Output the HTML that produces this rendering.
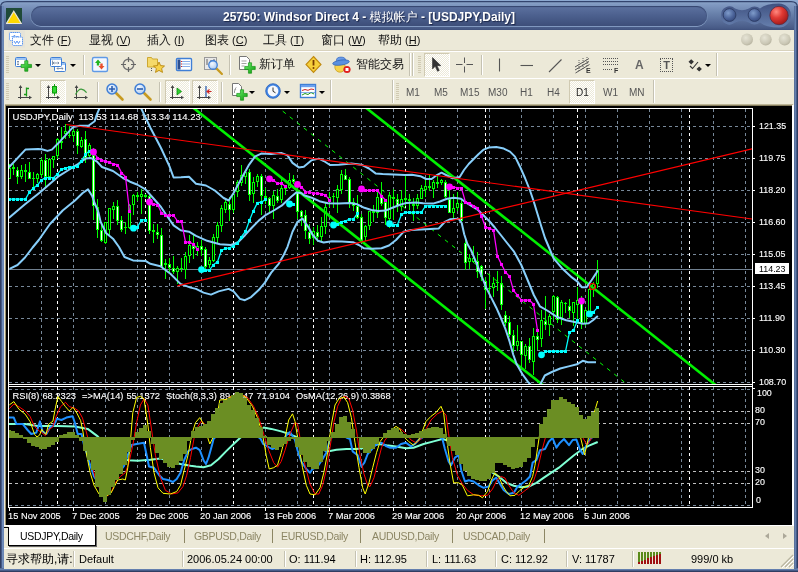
<!DOCTYPE html>
<html><head><meta charset="utf-8"><title>25750: Windsor Direct 4</title>
<style>
html,body{margin:0;padding:0}
body>*{will-change:transform}
body{width:798px;height:572px;position:relative;overflow:hidden;background:#ece9d8;font-family:"Liberation Sans","WenQuanYi Zen Hei","Noto Sans CJK SC",sans-serif;font-size:12px;color:#000}
.abs{position:absolute}
#frameL{left:0;top:0;width:4px;height:572px;background:linear-gradient(90deg,#2b3554 0,#384a76 30%,#6f8cba 62%,#6a86b4 88%,#4a5f8e 100%)}
#frameR{left:794px;top:0;width:4px;height:572px;background:linear-gradient(90deg,#3a4a72 0,#6f8cba 22%,#5a74a4 50%,#34446e 75%,#2b3554)}
#frameB{left:0;top:568px;width:798px;height:4px;background:linear-gradient(#3a4a72 0,#6f8cba 22%,#5a74a4 50%,#34446e 75%,#2b3554)}
#title{left:0;top:0;width:798px;height:30px;background:linear-gradient(#8aa3c8 0,#8aa3c8 2px,#7f98c0 5px,#6880aa 14px,#566b97 22px,#485b87 28px,#3f507c 30px);border-radius:7px 7px 0 0}
#corner{left:0;top:0;width:798px;height:2px;background:#8ca8d0}
#pill{left:31px;top:6px;width:676px;height:20px;border-radius:10px;background:linear-gradient(#5d72a0,#4d618f 45%,#41537f 85%,#3d4e79);box-shadow:inset 0 1px 1px #34446d,0 1px 0 #8098bf,-1px 0 0 #7088b0,1px 0 0 #7088b0}
#ttext{left:0;top:8.5px;width:738px;text-align:center;color:#fff;font-weight:bold;font-size:12px;line-height:17px;text-shadow:1px 1px 1px #1c2748;white-space:nowrap}
.tb{border-radius:50%}
#menubar{left:4px;top:30px;width:790px;height:20px;background:#ece9d8;border-bottom:1px solid #d8d2bd}
.mi{top:33px;height:16px;line-height:15px;font-size:12px;white-space:nowrap;color:#111}
.mi i{font-style:normal;font-size:11px;margin-left:3px}
.mi u{text-decoration:underline}
#tb1{left:4px;top:51px;width:790px;height:26px;background:#ece9d8;border-top:1px solid #fff}
#tb2{left:4px;top:78px;width:790px;height:26px;background:#ece9d8;border-top:1px solid #fff}
.grip{width:3px;height:18px;background:repeating-linear-gradient(#d0cab2 0,#d0cab2 1px,#ece9d8 1px,#ece9d8 2px)}
.sep{width:1px;height:20px;background:#c5c2b2;box-shadow:1px 0 0 #fff}
.chk{background:#f6f5ee;border:1px solid #fff;border-top-color:#d0cab2;border-left-color:#d0cab2;background-image:repeating-conic-gradient(#fff 0 25%,#ece9d8 0 50%);background-size:2px 2px}
.tf{top:87px;font-size:10px;color:#555;line-height:12px;white-space:nowrap}
.dd{width:0;height:0;border-left:3px solid transparent;border-right:3px solid transparent;border-top:3px solid #000}
.tl{font-size:12px;line-height:14px;white-space:nowrap;color:#111}
#tabs{left:4px;top:526px;width:790px;height:22px;background:#ece9d8}
.tab{top:530px;font-size:10.5px;letter-spacing:-0.3px;line-height:13px;color:#8c8664;white-space:nowrap}
.tsep{top:529px;width:1px;height:14px;background:#8c8664}
#status{left:4px;top:548px;width:790px;height:20px;background:#ece9d8;border-top:1px solid #fff}
.st{top:552px;font-size:11px;line-height:14px;white-space:nowrap;color:#000}
.sd{top:551px;width:1px;height:16px;background:#c5c2b2;box-shadow:1px 0 0 #fff}
</style></head><body>
<div class="abs" id="corner"></div>
<div class="abs" id="title"></div>
<div class="abs" id="frameL" style="top:6px"></div><div class="abs" id="frameR" style="top:6px"></div><div class="abs" id="frameB"></div>
<svg class="abs" style="left:0;top:0" width="798" height="32" viewBox="0 0 798 32"><path d="M0 0H798V9H797.500V7Q797.500 1.500 791 1.500H7Q0.500 1.500 0.500 7V9H0z" fill="#8ca8d0"/><path d="M0.600 31V7Q0.600 1.600 7 1.600H791Q797.400 1.600 797.400 7V31" fill="none" stroke="#33446e" stroke-width="1.2"/></svg>
<svg class="abs" style="left:6px;top:8px" width="16" height="16" viewBox="0 0 16 16"><rect width="16" height="16" fill="#1f4a38"/><path d="M7.8 3.2 L15.4 15.6 L0.4 15.6 Z" fill="#ffd800" stroke="#e8e4d8" stroke-width="1.2"/></svg>
<div class="abs" id="pill"></div>
<div class="abs" id="ttext">25750: Windsor Direct 4 - 模拟帐户 - [USDJPY,Daily]</div>
<svg class="abs" style="left:710px;top:0" width="84" height="30" viewBox="710 0 84 30">
<defs>
<radialGradient id="gb" cx="0.4" cy="0.35" r="0.7"><stop offset="0" stop-color="#7f9ccb"/><stop offset="0.6" stop-color="#4b6399"/><stop offset="1" stop-color="#34477a"/></radialGradient>
<radialGradient id="gr" cx="0.35" cy="0.3" r="0.75"><stop offset="0" stop-color="#ff8a80"/><stop offset="0.45" stop-color="#e03a34"/><stop offset="1" stop-color="#a01818"/></radialGradient>
<linearGradient id="gs" x1="0" y1="0" x2="0" y2="1"><stop offset="0" stop-color="#38497a"/><stop offset="1" stop-color="#6a84b2"/></linearGradient>
</defs>
<path d="M721 15 a8.5 8.5 0 0 1 14 -6.5 q7 3.5 14 0 a8.5 8.5 0 0 1 11 0 q6 -5 19 -5 a12 12 0 0 1 0 24 q-13 0 -19 -5 a8.5 8.5 0 0 1 -11 0 q-7 -3.5 -14 0 a8.5 8.5 0 0 1 -14 -6.5z" fill="url(#gs)" opacity="0.9"/>
<circle cx="729.5" cy="15" r="6.4" fill="url(#gb)" stroke="#2f3f68" stroke-width="1"/><circle cx="754.5" cy="15" r="6.4" fill="url(#gb)" stroke="#2f3f68" stroke-width="1"/>
<circle cx="779" cy="15.5" r="9.2" fill="url(#gr)" stroke="#5a2a40" stroke-width="0.8"/>
</svg>
<div class="abs" id="menubar"></div>
<svg class="abs" style="left:8px;top:30px" width="18" height="18" viewBox="8 30 18 18"><rect x="8" y="30.500" width="17" height="17" fill="#e6e4d8"/><rect x="9.500" y="32.500" width="11" height="8" rx="1" fill="#fff" stroke="#5a96f0" stroke-dasharray="1.5,0.5"/><path d="M11.500 36.500h2l1-1.500 1 3 1-1.500h2" stroke="#4a8af0" fill="none" stroke-width="0.8"/><rect x="12.500" y="37" width="10" height="8.500" rx="1" fill="#fff" stroke="#5a96f0" stroke-dasharray="1.5,0.5"/><path d="M14 41l1.500 2.500 1.500-2.500 1.500 2.500 1.500-2.500" stroke="#4a8af0" fill="none" stroke-width="0.9"/></svg>
<div class="abs mi" style="left:30px">文件<i>(<u>F</u>)</i></div>
<div class="abs mi" style="left:89px">显视<i>(<u>V</u>)</i></div>
<div class="abs mi" style="left:147px">插入<i>(<u>I</u>)</i></div>
<div class="abs mi" style="left:205px">图表<i>(<u>C</u>)</i></div>
<div class="abs mi" style="left:263px">工具<i>(<u>T</u>)</i></div>
<div class="abs mi" style="left:321px">窗口<i>(<u>W</u>)</i></div>
<div class="abs mi" style="left:378px">帮助<i>(<u>H</u>)</i></div>
<svg class="abs" style="left:738px;top:31px" width="56" height="18" viewBox="738 31 56 18"><defs><radialGradient id="gm" cx="0.4" cy="0.35" r="0.7"><stop offset="0" stop-color="#e6e4d6"/><stop offset="0.7" stop-color="#cbc8b6"/><stop offset="1" stop-color="#b4b09c"/></radialGradient></defs>
<circle cx="747" cy="39.5" r="6" fill="url(#gm)"/><circle cx="765.7" cy="39.5" r="6" fill="url(#gm)"/><circle cx="784.7" cy="39.5" r="6" fill="url(#gm)"/></svg>
<div class="abs" id="tb1"></div><div class="abs" id="tb2"></div>

<!-- toolbar row 1 -->
<div class="abs grip" style="left:6px;top:56px"></div>
<div class="abs sep" style="left:83px;top:55px"></div>
<div class="abs sep" style="left:229px;top:55px"></div>
<div class="abs sep" style="left:409px;top:53px;height:23px"></div><div class="abs sep" style="left:412px;top:53px;height:23px"></div>
<div class="abs grip" style="left:418px;top:56px"></div><div class="abs sep" style="left:716px;top:53px;height:23px"></div>
<div class="abs chk" style="left:424px;top:53px;width:24px;height:22px"></div>
<div class="abs sep" style="left:481px;top:55px"></div>
<div class="abs dd" style="left:35px;top:64px"></div><div class="abs dd" style="left:70px;top:64px"></div><div class="abs dd" style="left:705px;top:64px"></div>
<div class="abs tl" style="left:259px;top:57px">新订单</div>
<div class="abs tl" style="left:356px;top:57px">智能交易</div>
<div class="abs" style="left:634.5px;top:58px;font-size:12px;font-weight:bold;color:#666;line-height:14px">A</div>
<div class="abs" style="left:660px;top:58px;font-size:11px;font-weight:bold;color:#555;line-height:13px;width:11px;height:12px;border:1px dotted #555;text-align:center">T</div>
<div class="abs" style="left:586px;top:67px;font-size:7px;font-weight:bold;color:#333;line-height:8px">E</div>
<div class="abs" style="left:614px;top:67px;font-size:7px;font-weight:bold;color:#333;line-height:8px">F</div>
<!-- toolbar row 2 -->
<div class="abs grip" style="left:6px;top:83px"></div>
<div class="abs chk" style="left:40px;top:80px;width:24px;height:22px"></div>
<div class="abs sep" style="left:97px;top:82px"></div>
<div class="abs sep" style="left:159px;top:82px"></div>
<div class="abs chk" style="left:165px;top:80px;width:23px;height:22px"></div>
<div class="abs chk" style="left:192px;top:80px;width:24px;height:22px"></div>
<div class="abs sep" style="left:221px;top:82px"></div>
<div class="abs dd" style="left:249px;top:91px"></div><div class="abs dd" style="left:284px;top:91px"></div><div class="abs dd" style="left:319px;top:91px"></div>
<div class="abs sep" style="left:330px;top:80px;height:23px"></div>
<div class="abs sep" style="left:392px;top:80px;height:23px"></div>
<div class="abs grip" style="left:396px;top:83px"></div>
<div class="abs chk" style="left:569px;top:80px;width:24px;height:22px"></div>
<div class="abs sep" style="left:653px;top:80px;height:23px"></div>
<div class="abs tf" style="left:406px">M1</div><div class="abs tf" style="left:434px">M5</div><div class="abs tf" style="left:460px">M15</div><div class="abs tf" style="left:488px">M30</div><div class="abs tf" style="left:520px">H1</div><div class="abs tf" style="left:547px">H4</div><div class="abs tf" style="left:576px;color:#222">D1</div><div class="abs tf" style="left:603px">W1</div><div class="abs tf" style="left:629px">MN</div>
<svg class="abs" style="left:4px;top:51px" width="790" height="54" viewBox="4 51 790 54">
<defs>
<linearGradient id="gpl" x1="0" y1="0" x2="1" y2="1"><stop offset="0" stop-color="#6cf06c"/><stop offset="1" stop-color="#0a9a0a"/></linearGradient>
<radialGradient id="glens" cx="0.4" cy="0.35" r="0.7"><stop offset="0" stop-color="#f4f9ff"/><stop offset="1" stop-color="#a9c8f0"/></radialGradient>
<g id="plus"><path d="M-1.5 -5h3v3.5h3.5v3h-3.5v3.5h-3v-3.5h-3.5v-3h3.5z" fill="url(#gpl)" stroke="#0a8a0a" stroke-width="0.6"/></g>
<g id="win"><rect x="0.5" y="0.5" width="11" height="9" rx="1" fill="#fff" stroke="#3f7fd6"/><rect x="1" y="1" width="10" height="2" fill="#9cc4f4"/></g>
<g id="axes"><path d="M3.500 3v13M1 14.500h13" stroke="#444" stroke-width="1" fill="none"/><path d="M3.500 2l-1.800 3h3.600zM15 14.500l-3 -1.800v3.600z" fill="#444"/></g>
<g id="mag"><line x1="4" y1="4" x2="10.5" y2="10.5" stroke="#c79a20" stroke-width="2.6" stroke-linecap="round"/><circle cx="0" cy="0" r="5" fill="url(#glens)" stroke="#3f7fd6" stroke-width="1.5"/></g>
</defs>
<!-- 1 new chart -->
<g transform="translate(15,57)"><use href="#win"/><path d="M3 4v4M2 5l1-1 1 1M2 7l1 1 1-1" stroke="#6a7f9a" stroke-width="0.8" fill="none"/></g><use href="#plus" transform="translate(26.3,66) scale(1.05)"/>
<!-- 2 profiles -->
<g transform="translate(54,62)"><use href="#win"/><path d="M3 6.500h6M3 6.500l1.200-1.200M3 6.500l1.200 1.200M9 6.500l-1.200-1.200M9 6.500l-1.200 1.200" stroke="#6a7f9a" stroke-width="0.8" fill="none"/></g><g transform="translate(50,57)"><use href="#win"/><path d="M3 6h6M3 6l1.200-1.200M3 6l1.200 1.200M9 6l-1.200-1.200M9 6l-1.200 1.200M2.500 3.500v4.500" stroke="#6a7f9a" stroke-width="0.8" fill="none"/></g>
<!-- 3 market watch -->
<rect x="92.5" y="57.5" width="15" height="14" rx="1.5" fill="#f4f8ff" stroke="#5f9ae6" stroke-width="1.4"/><path d="M96.800 65.500v-2.500h-1.800l3-3.500 3 3.500h-1.800v2.500z" fill="#22b422"/><path d="M100.300 63.500v2.500h-1.800l3 3.500 3-3.500h-1.800v-2.500z" fill="#e8502a"/>
<!-- 4 crosshair -->
<circle cx="128.5" cy="64.5" r="5.3" fill="none" stroke="#777" stroke-width="1.4"/><path d="M128.5 57v5M128.5 67v5M121 64.5h5M131 64.5h5" stroke="#666" stroke-width="1.2"/>
<!-- 5 folder star -->
<path d="M147.5 60v-2.5h4l1 1.5h5v8h-10z" fill="#f5d96a" stroke="#c9a227" stroke-width="0.9"/><path d="M159 62l1.6 3.6 3.9.4-2.9 2.6.9 3.8-3.5-2-3.5 2 .9-3.8-2.9-2.6 3.9-.4z" fill="#f7d24a" stroke="#b8860b" stroke-width="0.9"/><path d="M151.5 68v4" stroke="#555" stroke-dasharray="1,1"/>
<!-- 6 navigator -->
<rect x="176.5" y="58.5" width="15" height="12" rx="1" fill="#fff" stroke="#3f7fd6" stroke-width="1.4"/><rect x="177.5" y="59.5" width="3" height="10" fill="#2d4f8f"/><path d="M182 61.500h8M182 64h8M182 66.500h8" stroke="#7aa6e6" stroke-width="0.9"/><path d="M181 61.500h1M181 64h1M181 66.500h1" stroke="#d22" stroke-width="1"/>
<!-- 7 magnifier chart -->
<rect x="204.500" y="57.500" width="12" height="12" fill="#e8e8e8" stroke="#999"/><path d="M207 59v6M211 60v7M214 59v5" stroke="#555" stroke-width="0.9"/><use href="#mag" transform="translate(213,65) scale(0.85)"/>
<!-- 8 new order -->
<path d="M239.500 56.500h7l3 3v10h-10z" fill="#fff" stroke="#777"/><path d="M241.500 61h5M241.500 63.500h5M241.500 66h3" stroke="#999" stroke-width="0.9"/><use href="#plus" transform="translate(250,68) scale(1.05)"/>
<!-- 9 diamond -->
<path d="M313.500 56.500l7.500 8-7.500 8-7.500-8z" fill="#f6cf3a" stroke="#c08a10" stroke-width="1.1"/><path d="M313.500 60v5.500" stroke="#7a3b00" stroke-width="1.8"/><circle cx="313.500" cy="68" r="1" fill="#7a3b00"/>
<!-- 10 expert -->
<circle cx="340" cy="67" r="5.2" fill="#f7d24a" stroke="#c9a227" stroke-width="0.8"/><ellipse cx="341" cy="60.5" rx="4.6" ry="3.4" fill="#6a9ce8" stroke="#3a6cc0" stroke-width="0.7"/><ellipse cx="341" cy="62.6" rx="8.4" ry="2.5" fill="#5a90e0" stroke="#2d5fb0" stroke-width="0.7" transform="rotate(-8 341 62.6)"/><circle cx="347" cy="69.5" r="3.600" fill="#e02020"/><rect x="345.500" y="68" width="3" height="3" fill="#fff"/>
<!-- cursor -->
<path d="M432.500 57.500v11.500l2.700-2.700 2.300 5 1.800-.9-2.300-4.700h3.900z" fill="#333" stroke="#222" stroke-width="0.5"/>
<path d="M464.500 57.500v5.500M464.500 66.500v6M456 64.500h6.500M466.500 64.500h6.500" stroke="#555" stroke-width="1"/>
<path d="M499.500 58.500v13" stroke="#555" stroke-width="1.1"/><path d="M520.500 65.500h12.500" stroke="#555" stroke-width="1.1"/><path d="M549 72l12.500-12.500" stroke="#555" stroke-width="1.1"/>
<path d="M575 67l14-8.500M575 70l14-8.500M575.500 73l14-8.500" stroke="#555" stroke-width="1"/><path d="M579 60v11M583 58v11M587 57v10" stroke="#555" stroke-width="0.9" stroke-dasharray="1,1"/>
<path d="M603 58.500h15M603 61.500h15M603 64.500h15M603 69.500h9" stroke="#555" stroke-width="1.1" stroke-dasharray="1,1"/>
<path d="M688.500 61.800l2.700-2.600 2.700 2.600-2.700 2.600zM696.500 69l2.700-2.600 2.700 2.600-2.700 2.600z" fill="#333"/><path d="M690 66l2.500 2.500 5.500-6.500" stroke="#333" stroke-width="1.1" fill="none"/>
<!-- row 2 -->
<g transform="translate(17,83)"><use href="#axes"/><path d="M9.500 4.500v9M9.500 5.500h2.500M7 11.500h2.500" stroke="#1a9a1a" stroke-width="1.3"/></g>
<g transform="translate(45,83)"><use href="#axes"/><path d="M9.500 1v11.700" stroke="#1a9a1a" stroke-width="1"/><rect x="7.500" y="3.500" width="4" height="6.500" fill="#2fd82f" stroke="#0a9a0a"/></g>
<g transform="translate(73,83)"><use href="#axes"/><path d="M2.500 11.500Q5.500 6 8.300 6.200T13.600 9.700" stroke="#3a9a3a" stroke-width="1.2" fill="none"/></g>
<use href="#mag" transform="translate(112,89)"/><path d="M109 89h6M112 86v6" stroke="#2d5fb0" stroke-width="1.6"/>
<use href="#mag" transform="translate(140,89)"/><path d="M137 89h6" stroke="#2d5fb0" stroke-width="1.6"/>
<g transform="translate(169,83)"><use href="#axes"/><path d="M8 5l4.500 3.500-4.500 3.500z" fill="#2fd02f" stroke="#0a8a0a" stroke-width="0.8"/></g>
<g transform="translate(196,83)"><use href="#axes"/><path d="M10 3v11" stroke="#2d5fb0" stroke-width="1.3"/><path d="M15.500 8.500h-4M13.500 6.500l-2.500 2 2.500 2" stroke="#c22" stroke-width="1.1" fill="none"/></g>
<path d="M232.500 83.500h6l3 3v9h-9z" fill="#fff" stroke="#777"/><text x="234" y="92" font-size="7" font-style="italic" font-family="Liberation Serif,serif" fill="#555">f</text><use href="#plus" transform="translate(242,95) scale(1.05)"/>
<circle cx="273" cy="91" r="7.300" fill="#3f84e4" stroke="#2a5fb8" stroke-width="0.8"/><circle cx="273" cy="91" r="5.400" fill="#f6f8fc"/><path d="M273 87.500v3.800l2.500 1.500" stroke="#333" stroke-width="1" fill="none"/>
<rect x="300.500" y="84.500" width="15" height="13" fill="#fff" stroke="#3f7fd6" stroke-width="1.4"/><rect x="301" y="85" width="14" height="2.200" fill="#6aa0ee"/><path d="M302 90.500l3-1 3 .8 3-1.300 3 .5" stroke="#c22" stroke-width="1" fill="none"/><path d="M302 95l3-1.500 3 1 3-2 3 1.500" stroke="#1a9a1a" stroke-width="1" fill="none"/><path d="M301 92.500h14" stroke="#3f7fd6" stroke-width="0.6"/>
</svg>

<svg id="chart" width="786" height="419" viewBox="6 106 786 419" style="position:absolute;left:6px;top:106px">
<rect x="6" y="106" width="786" height="419" fill="#000"/>
<defs><clipPath id="cm"><rect x="9" y="109" width="743" height="275"/></clipPath><clipPath id="cs"><rect x="9" y="387" width="743" height="120"/></clipPath></defs>
<g stroke="#778899" stroke-width="1" stroke-dasharray="3,3" shape-rendering="crispEdges"><line x1="9" x2="752" y1="126.5" y2="126.5"/><line x1="9" x2="752" y1="158.5" y2="158.5"/><line x1="9" x2="752" y1="190.5" y2="190.5"/><line x1="9" x2="752" y1="222.5" y2="222.5"/><line x1="9" x2="752" y1="254.5" y2="254.5"/><line x1="9" x2="752" y1="286.5" y2="286.5"/><line x1="9" x2="752" y1="318.5" y2="318.5"/><line x1="9" x2="752" y1="350.5" y2="350.5"/><line x1="9" x2="752" y1="382.5" y2="382.5"/><line x1="41.5" x2="41.5" y1="109" y2="384"/><line x1="41.5" x2="41.5" y1="387" y2="507"/><line x1="73.5" x2="73.5" y1="109" y2="384"/><line x1="73.5" x2="73.5" y1="387" y2="507"/><line x1="105.5" x2="105.5" y1="109" y2="384"/><line x1="105.5" x2="105.5" y1="387" y2="507"/><line x1="137.5" x2="137.5" y1="109" y2="384"/><line x1="137.5" x2="137.5" y1="387" y2="507"/><line x1="169.5" x2="169.5" y1="109" y2="384"/><line x1="169.5" x2="169.5" y1="387" y2="507"/><line x1="201.5" x2="201.5" y1="109" y2="384"/><line x1="201.5" x2="201.5" y1="387" y2="507"/><line x1="233.5" x2="233.5" y1="109" y2="384"/><line x1="233.5" x2="233.5" y1="387" y2="507"/><line x1="265.5" x2="265.5" y1="109" y2="384"/><line x1="265.5" x2="265.5" y1="387" y2="507"/><line x1="297.5" x2="297.5" y1="109" y2="384"/><line x1="297.5" x2="297.5" y1="387" y2="507"/><line x1="329.5" x2="329.5" y1="109" y2="384"/><line x1="329.5" x2="329.5" y1="387" y2="507"/><line x1="361.5" x2="361.5" y1="109" y2="384"/><line x1="361.5" x2="361.5" y1="387" y2="507"/><line x1="393.5" x2="393.5" y1="109" y2="384"/><line x1="393.5" x2="393.5" y1="387" y2="507"/><line x1="425.5" x2="425.5" y1="109" y2="384"/><line x1="425.5" x2="425.5" y1="387" y2="507"/><line x1="457.5" x2="457.5" y1="109" y2="384"/><line x1="457.5" x2="457.5" y1="387" y2="507"/><line x1="489.5" x2="489.5" y1="109" y2="384"/><line x1="489.5" x2="489.5" y1="387" y2="507"/><line x1="521.5" x2="521.5" y1="109" y2="384"/><line x1="521.5" x2="521.5" y1="387" y2="507"/><line x1="553.5" x2="553.5" y1="109" y2="384"/><line x1="553.5" x2="553.5" y1="387" y2="507"/><line x1="585.5" x2="585.5" y1="109" y2="384"/><line x1="585.5" x2="585.5" y1="387" y2="507"/><line x1="617.5" x2="617.5" y1="109" y2="384"/><line x1="617.5" x2="617.5" y1="387" y2="507"/><line x1="649.5" x2="649.5" y1="109" y2="384"/><line x1="649.5" x2="649.5" y1="387" y2="507"/><line x1="681.5" x2="681.5" y1="109" y2="384"/><line x1="681.5" x2="681.5" y1="387" y2="507"/><line x1="713.5" x2="713.5" y1="109" y2="384"/><line x1="713.5" x2="713.5" y1="387" y2="507"/><line x1="745.5" x2="745.5" y1="109" y2="384"/><line x1="745.5" x2="745.5" y1="387" y2="507"/><line x1="9" x2="752" y1="389.5" y2="389.5"/><line x1="9" x2="752" y1="505.5" y2="505.5"/></g>
<g stroke="#fff" stroke-width="1" stroke-dasharray="3,3" shape-rendering="crispEdges"><line x1="57.5" x2="57.5" y1="109" y2="384"/><line x1="57.5" x2="57.5" y1="387" y2="507"/><line x1="145.5" x2="145.5" y1="109" y2="384"/><line x1="145.5" x2="145.5" y1="387" y2="507"/><line x1="233.5" x2="233.5" y1="109" y2="384"/><line x1="233.5" x2="233.5" y1="387" y2="507"/><line x1="313.5" x2="313.5" y1="109" y2="384"/><line x1="313.5" x2="313.5" y1="387" y2="507"/><line x1="405.5" x2="405.5" y1="109" y2="384"/><line x1="405.5" x2="405.5" y1="387" y2="507"/><line x1="485.5" x2="485.5" y1="109" y2="384"/><line x1="485.5" x2="485.5" y1="387" y2="507"/><line x1="577.5" x2="577.5" y1="109" y2="384"/><line x1="577.5" x2="577.5" y1="387" y2="507"/><line x1="689.5" x2="689.5" y1="109" y2="384"/><line x1="689.5" x2="689.5" y1="387" y2="507"/></g>
<g stroke="#c0c0c0" stroke-width="1" stroke-dasharray="3,3" shape-rendering="crispEdges"><line x1="9" x2="752" y1="411.5" y2="411.5"/><line x1="9" x2="752" y1="423.5" y2="423.5"/><line x1="9" x2="752" y1="471.5" y2="471.5"/><line x1="9" x2="752" y1="483.5" y2="483.5"/></g>
<g font-family="Liberation Sans, sans-serif" font-size="9.3px" fill="#fff" stroke="#fff" stroke-width="0.12">
<text x="12.5" y="120" font-size="9.55px" word-spacing="0.15px" xml:space="preserve">USDJPY,Daily  113.53 114.68 113.34 114.23</text>
<text x="12.5" y="399" word-spacing="0.45px" xml:space="preserve">RSI(8) 68.2323  =&gt;MA(14) 55.1372  Stoch(8,3,3) 89.1247 71.9104  OsMA(12,26,9) 0.3868</text>
</g>
<g clip-path="url(#cm)">
<line x1="9" x2="752" y1="269.5" y2="269.5" stroke="#708090" stroke-width="1" shape-rendering="crispEdges"/>
<g shape-rendering="crispEdges"><rect x="9" y="164" width="1" height="15" fill="#0f0"/><rect x="8" y="168" width="3" height="11" fill="#0f0"/><rect x="9" y="169" width="1" height="9" fill="#000"/><rect x="13" y="164" width="1" height="11" fill="#0f0"/><rect x="12" y="167" width="3" height="2" fill="#0f0"/><rect x="13" y="168" width="1" height="0" fill="#fff"/><rect x="17" y="167" width="1" height="17" fill="#0f0"/><rect x="16" y="170" width="3" height="7" fill="#0f0"/><rect x="17" y="171" width="1" height="5" fill="#fff"/><rect x="21" y="165" width="1" height="14" fill="#0f0"/><rect x="20" y="170" width="3" height="7" fill="#0f0"/><rect x="21" y="171" width="1" height="5" fill="#000"/><rect x="25" y="164" width="1" height="18" fill="#0f0"/><rect x="24" y="170" width="3" height="2" fill="#0f0"/><rect x="25" y="171" width="1" height="0" fill="#fff"/><rect x="29" y="162" width="1" height="17" fill="#0f0"/><rect x="28" y="172" width="3" height="7" fill="#0f0"/><rect x="29" y="173" width="1" height="5" fill="#fff"/><rect x="33" y="172" width="1" height="15" fill="#0f0"/><rect x="32" y="178" width="3" height="1" fill="#0f0"/><rect x="37" y="173" width="1" height="10" fill="#0f0"/><rect x="36" y="174" width="3" height="5" fill="#0f0"/><rect x="37" y="175" width="1" height="3" fill="#000"/><rect x="41" y="158" width="1" height="19" fill="#0f0"/><rect x="40" y="160" width="3" height="15" fill="#0f0"/><rect x="41" y="161" width="1" height="13" fill="#000"/><rect x="45" y="154" width="1" height="33" fill="#0f0"/><rect x="44" y="160" width="3" height="17" fill="#0f0"/><rect x="45" y="161" width="1" height="15" fill="#fff"/><rect x="49" y="158" width="1" height="20" fill="#0f0"/><rect x="48" y="159" width="3" height="18" fill="#0f0"/><rect x="49" y="160" width="1" height="16" fill="#000"/><rect x="53" y="156" width="1" height="12" fill="#0f0"/><rect x="52" y="156" width="3" height="4" fill="#0f0"/><rect x="53" y="157" width="1" height="2" fill="#000"/><rect x="57" y="138" width="1" height="21" fill="#0f0"/><rect x="56" y="139" width="3" height="17" fill="#0f0"/><rect x="57" y="140" width="1" height="15" fill="#000"/><rect x="61" y="127" width="1" height="22" fill="#0f0"/><rect x="60" y="141" width="3" height="2" fill="#0f0"/><rect x="61" y="142" width="1" height="0" fill="#fff"/><rect x="65" y="124" width="1" height="15" fill="#0f0"/><rect x="64" y="131" width="3" height="3" fill="#0f0"/><rect x="65" y="132" width="1" height="1" fill="#000"/><rect x="69" y="126" width="1" height="12" fill="#0f0"/><rect x="68" y="135" width="3" height="1" fill="#0f0"/><rect x="73" y="129" width="1" height="13" fill="#0f0"/><rect x="72" y="131" width="3" height="5" fill="#0f0"/><rect x="73" y="132" width="1" height="3" fill="#000"/><rect x="77" y="129" width="1" height="25" fill="#0f0"/><rect x="76" y="131" width="3" height="15" fill="#0f0"/><rect x="77" y="132" width="1" height="13" fill="#fff"/><rect x="81" y="137" width="1" height="11" fill="#0f0"/><rect x="80" y="140" width="3" height="7" fill="#0f0"/><rect x="81" y="141" width="1" height="5" fill="#000"/><rect x="85" y="131" width="1" height="32" fill="#0f0"/><rect x="84" y="139" width="3" height="19" fill="#0f0"/><rect x="85" y="140" width="1" height="17" fill="#fff"/><rect x="89" y="143" width="1" height="15" fill="#0f0"/><rect x="88" y="145" width="3" height="11" fill="#0f0"/><rect x="89" y="146" width="1" height="9" fill="#000"/><rect x="93" y="148" width="1" height="72" fill="#0f0"/><rect x="92" y="155" width="3" height="51" fill="#0f0"/><rect x="93" y="156" width="1" height="49" fill="#fff"/><rect x="97" y="199" width="1" height="39" fill="#0f0"/><rect x="96" y="207" width="3" height="23" fill="#0f0"/><rect x="97" y="208" width="1" height="21" fill="#fff"/><rect x="101" y="223" width="1" height="19" fill="#0f0"/><rect x="100" y="230" width="3" height="11" fill="#0f0"/><rect x="101" y="231" width="1" height="9" fill="#fff"/><rect x="105" y="222" width="1" height="22" fill="#0f0"/><rect x="104" y="222" width="3" height="21" fill="#0f0"/><rect x="105" y="223" width="1" height="19" fill="#000"/><rect x="109" y="208" width="1" height="27" fill="#0f0"/><rect x="108" y="208" width="3" height="22" fill="#0f0"/><rect x="109" y="209" width="1" height="20" fill="#000"/><rect x="113" y="202" width="1" height="17" fill="#0f0"/><rect x="112" y="206" width="3" height="4" fill="#0f0"/><rect x="113" y="207" width="1" height="2" fill="#000"/><rect x="117" y="200" width="1" height="25" fill="#0f0"/><rect x="116" y="206" width="3" height="15" fill="#0f0"/><rect x="117" y="207" width="1" height="13" fill="#fff"/><rect x="121" y="216" width="1" height="16" fill="#0f0"/><rect x="120" y="220" width="3" height="10" fill="#0f0"/><rect x="121" y="221" width="1" height="8" fill="#fff"/><rect x="125" y="222" width="1" height="12" fill="#0f0"/><rect x="124" y="227" width="3" height="1" fill="#0f0"/><rect x="129" y="204" width="1" height="25" fill="#0f0"/><rect x="128" y="205" width="3" height="23" fill="#0f0"/><rect x="129" y="206" width="1" height="21" fill="#000"/><rect x="133" y="194" width="1" height="21" fill="#0f0"/><rect x="132" y="195" width="3" height="10" fill="#0f0"/><rect x="133" y="196" width="1" height="8" fill="#000"/><rect x="137" y="192" width="1" height="9" fill="#0f0"/><rect x="136" y="195" width="3" height="2" fill="#0f0"/><rect x="141" y="189" width="1" height="25" fill="#0f0"/><rect x="140" y="194" width="3" height="3" fill="#0f0"/><rect x="141" y="195" width="1" height="1" fill="#000"/><rect x="145" y="194" width="1" height="4" fill="#0f0"/><rect x="144" y="195" width="3" height="2" fill="#0f0"/><rect x="149" y="195" width="1" height="39" fill="#0f0"/><rect x="148" y="196" width="3" height="35" fill="#0f0"/><rect x="149" y="197" width="1" height="33" fill="#fff"/><rect x="153" y="224" width="1" height="19" fill="#0f0"/><rect x="152" y="230" width="3" height="2" fill="#0f0"/><rect x="157" y="224" width="1" height="15" fill="#0f0"/><rect x="156" y="232" width="3" height="3" fill="#0f0"/><rect x="157" y="233" width="1" height="1" fill="#fff"/><rect x="161" y="228" width="1" height="40" fill="#0f0"/><rect x="160" y="235" width="3" height="32" fill="#0f0"/><rect x="161" y="236" width="1" height="30" fill="#fff"/><rect x="165" y="259" width="1" height="20" fill="#0f0"/><rect x="164" y="263" width="3" height="2" fill="#0f0"/><rect x="165" y="264" width="1" height="0" fill="#fff"/><rect x="169" y="258" width="1" height="16" fill="#0f0"/><rect x="168" y="264" width="3" height="4" fill="#0f0"/><rect x="169" y="265" width="1" height="2" fill="#fff"/><rect x="173" y="256" width="1" height="18" fill="#0f0"/><rect x="172" y="268" width="3" height="4" fill="#0f0"/><rect x="173" y="269" width="1" height="2" fill="#fff"/><rect x="177" y="266" width="1" height="18" fill="#0f0"/><rect x="176" y="268" width="3" height="4" fill="#0f0"/><rect x="177" y="269" width="1" height="2" fill="#000"/><rect x="181" y="258" width="1" height="14" fill="#0f0"/><rect x="180" y="268" width="3" height="1" fill="#0f0"/><rect x="185" y="252" width="1" height="27" fill="#0f0"/><rect x="184" y="256" width="3" height="14" fill="#0f0"/><rect x="185" y="257" width="1" height="12" fill="#000"/><rect x="189" y="235" width="1" height="28" fill="#0f0"/><rect x="188" y="245" width="3" height="11" fill="#0f0"/><rect x="189" y="246" width="1" height="9" fill="#000"/><rect x="193" y="235" width="1" height="24" fill="#0f0"/><rect x="192" y="246" width="3" height="3" fill="#0f0"/><rect x="193" y="247" width="1" height="1" fill="#fff"/><rect x="197" y="242" width="1" height="14" fill="#0f0"/><rect x="196" y="246" width="3" height="4" fill="#0f0"/><rect x="197" y="247" width="1" height="2" fill="#000"/><rect x="201" y="240" width="1" height="16" fill="#0f0"/><rect x="200" y="246" width="3" height="4" fill="#0f0"/><rect x="201" y="247" width="1" height="2" fill="#fff"/><rect x="205" y="247" width="1" height="24" fill="#0f0"/><rect x="204" y="249" width="3" height="18" fill="#0f0"/><rect x="205" y="250" width="1" height="16" fill="#fff"/><rect x="209" y="257" width="1" height="11" fill="#0f0"/><rect x="208" y="260" width="3" height="5" fill="#0f0"/><rect x="209" y="261" width="1" height="3" fill="#000"/><rect x="213" y="234" width="1" height="28" fill="#0f0"/><rect x="212" y="237" width="3" height="24" fill="#0f0"/><rect x="213" y="238" width="1" height="22" fill="#000"/><rect x="217" y="222" width="1" height="22" fill="#0f0"/><rect x="216" y="225" width="3" height="13" fill="#0f0"/><rect x="217" y="226" width="1" height="11" fill="#000"/><rect x="221" y="205" width="1" height="27" fill="#0f0"/><rect x="220" y="208" width="3" height="18" fill="#0f0"/><rect x="221" y="209" width="1" height="16" fill="#000"/><rect x="225" y="198" width="1" height="15" fill="#0f0"/><rect x="224" y="202" width="3" height="8" fill="#0f0"/><rect x="225" y="203" width="1" height="6" fill="#000"/><rect x="229" y="197" width="1" height="24" fill="#0f0"/><rect x="228" y="204" width="3" height="6" fill="#0f0"/><rect x="229" y="205" width="1" height="4" fill="#fff"/><rect x="233" y="191" width="1" height="22" fill="#0f0"/><rect x="232" y="194" width="3" height="16" fill="#0f0"/><rect x="233" y="195" width="1" height="14" fill="#000"/><rect x="237" y="180" width="1" height="17" fill="#0f0"/><rect x="236" y="182" width="3" height="10" fill="#0f0"/><rect x="237" y="183" width="1" height="8" fill="#000"/><rect x="241" y="165" width="1" height="21" fill="#0f0"/><rect x="240" y="175" width="3" height="8" fill="#0f0"/><rect x="241" y="176" width="1" height="6" fill="#000"/><rect x="245" y="170" width="1" height="14" fill="#0f0"/><rect x="244" y="172" width="3" height="5" fill="#0f0"/><rect x="245" y="173" width="1" height="3" fill="#000"/><rect x="249" y="169" width="1" height="32" fill="#0f0"/><rect x="248" y="172" width="3" height="23" fill="#0f0"/><rect x="249" y="173" width="1" height="21" fill="#fff"/><rect x="253" y="177" width="1" height="26" fill="#0f0"/><rect x="252" y="182" width="3" height="12" fill="#0f0"/><rect x="253" y="183" width="1" height="10" fill="#000"/><rect x="257" y="174" width="1" height="13" fill="#0f0"/><rect x="256" y="176" width="3" height="6" fill="#0f0"/><rect x="257" y="177" width="1" height="4" fill="#000"/><rect x="261" y="174" width="1" height="41" fill="#0f0"/><rect x="260" y="176" width="3" height="20" fill="#0f0"/><rect x="261" y="177" width="1" height="18" fill="#fff"/><rect x="265" y="188" width="1" height="16" fill="#0f0"/><rect x="264" y="196" width="3" height="2" fill="#0f0"/><rect x="269" y="197" width="1" height="15" fill="#0f0"/><rect x="268" y="198" width="3" height="8" fill="#0f0"/><rect x="269" y="199" width="1" height="6" fill="#fff"/><rect x="273" y="191" width="1" height="28" fill="#0f0"/><rect x="272" y="195" width="3" height="11" fill="#0f0"/><rect x="273" y="196" width="1" height="9" fill="#000"/><rect x="277" y="189" width="1" height="14" fill="#0f0"/><rect x="276" y="196" width="3" height="5" fill="#0f0"/><rect x="277" y="197" width="1" height="3" fill="#fff"/><rect x="281" y="178" width="1" height="25" fill="#0f0"/><rect x="280" y="188" width="3" height="12" fill="#0f0"/><rect x="281" y="189" width="1" height="10" fill="#000"/><rect x="285" y="186" width="1" height="9" fill="#0f0"/><rect x="284" y="187" width="3" height="2" fill="#0f0"/><rect x="289" y="173" width="1" height="16" fill="#0f0"/><rect x="288" y="180" width="3" height="8" fill="#0f0"/><rect x="289" y="181" width="1" height="6" fill="#000"/><rect x="293" y="175" width="1" height="9" fill="#0f0"/><rect x="292" y="179" width="3" height="3" fill="#0f0"/><rect x="293" y="180" width="1" height="1" fill="#fff"/><rect x="297" y="184" width="1" height="35" fill="#0f0"/><rect x="296" y="191" width="3" height="21" fill="#0f0"/><rect x="297" y="192" width="1" height="19" fill="#fff"/><rect x="301" y="210" width="1" height="16" fill="#0f0"/><rect x="300" y="211" width="3" height="6" fill="#0f0"/><rect x="301" y="212" width="1" height="4" fill="#fff"/><rect x="305" y="210" width="1" height="29" fill="#0f0"/><rect x="304" y="215" width="3" height="16" fill="#0f0"/><rect x="305" y="216" width="1" height="14" fill="#fff"/><rect x="309" y="224" width="1" height="20" fill="#0f0"/><rect x="308" y="232" width="3" height="7" fill="#0f0"/><rect x="309" y="233" width="1" height="5" fill="#fff"/><rect x="313" y="227" width="1" height="18" fill="#0f0"/><rect x="312" y="231" width="3" height="7" fill="#0f0"/><rect x="313" y="232" width="1" height="5" fill="#000"/><rect x="317" y="225" width="1" height="17" fill="#0f0"/><rect x="316" y="232" width="3" height="5" fill="#0f0"/><rect x="317" y="233" width="1" height="3" fill="#fff"/><rect x="321" y="217" width="1" height="25" fill="#0f0"/><rect x="320" y="226" width="3" height="11" fill="#0f0"/><rect x="321" y="227" width="1" height="9" fill="#000"/><rect x="325" y="203" width="1" height="31" fill="#0f0"/><rect x="324" y="207" width="3" height="20" fill="#0f0"/><rect x="325" y="208" width="1" height="18" fill="#000"/><rect x="329" y="192" width="1" height="15" fill="#0f0"/><rect x="328" y="197" width="3" height="5" fill="#0f0"/><rect x="329" y="198" width="1" height="3" fill="#000"/><rect x="333" y="193" width="1" height="15" fill="#0f0"/><rect x="332" y="196" width="3" height="1" fill="#0f0"/><rect x="337" y="185" width="1" height="28" fill="#0f0"/><rect x="336" y="189" width="3" height="9" fill="#0f0"/><rect x="337" y="190" width="1" height="7" fill="#000"/><rect x="341" y="170" width="1" height="24" fill="#0f0"/><rect x="340" y="174" width="3" height="16" fill="#0f0"/><rect x="341" y="175" width="1" height="14" fill="#000"/><rect x="345" y="169" width="1" height="11" fill="#0f0"/><rect x="344" y="175" width="3" height="5" fill="#0f0"/><rect x="345" y="176" width="1" height="3" fill="#fff"/><rect x="349" y="177" width="1" height="31" fill="#0f0"/><rect x="348" y="179" width="3" height="24" fill="#0f0"/><rect x="349" y="180" width="1" height="22" fill="#fff"/><rect x="353" y="198" width="1" height="13" fill="#0f0"/><rect x="352" y="202" width="3" height="4" fill="#0f0"/><rect x="353" y="203" width="1" height="2" fill="#fff"/><rect x="357" y="195" width="1" height="24" fill="#0f0"/><rect x="356" y="206" width="3" height="12" fill="#0f0"/><rect x="357" y="207" width="1" height="10" fill="#fff"/><rect x="361" y="214" width="1" height="27" fill="#0f0"/><rect x="360" y="217" width="3" height="24" fill="#0f0"/><rect x="361" y="218" width="1" height="22" fill="#fff"/><rect x="365" y="225" width="1" height="16" fill="#0f0"/><rect x="364" y="226" width="3" height="11" fill="#0f0"/><rect x="365" y="227" width="1" height="9" fill="#000"/><rect x="369" y="211" width="1" height="19" fill="#0f0"/><rect x="368" y="211" width="3" height="15" fill="#0f0"/><rect x="369" y="212" width="1" height="13" fill="#000"/><rect x="373" y="205" width="1" height="17" fill="#0f0"/><rect x="372" y="211" width="3" height="2" fill="#0f0"/><rect x="373" y="212" width="1" height="0" fill="#fff"/><rect x="377" y="192" width="1" height="26" fill="#0f0"/><rect x="376" y="197" width="3" height="16" fill="#0f0"/><rect x="377" y="198" width="1" height="14" fill="#000"/><rect x="381" y="182" width="1" height="24" fill="#0f0"/><rect x="380" y="197" width="3" height="7" fill="#0f0"/><rect x="381" y="198" width="1" height="5" fill="#fff"/><rect x="385" y="202" width="1" height="23" fill="#0f0"/><rect x="384" y="202" width="3" height="16" fill="#0f0"/><rect x="385" y="203" width="1" height="14" fill="#fff"/><rect x="389" y="192" width="1" height="36" fill="#0f0"/><rect x="388" y="195" width="3" height="24" fill="#0f0"/><rect x="389" y="196" width="1" height="22" fill="#000"/><rect x="393" y="189" width="1" height="31" fill="#0f0"/><rect x="392" y="197" width="3" height="2" fill="#0f0"/><rect x="393" y="198" width="1" height="0" fill="#fff"/><rect x="397" y="194" width="1" height="18" fill="#0f0"/><rect x="396" y="199" width="3" height="7" fill="#0f0"/><rect x="397" y="200" width="1" height="5" fill="#fff"/><rect x="401" y="190" width="1" height="21" fill="#0f0"/><rect x="400" y="199" width="3" height="8" fill="#0f0"/><rect x="401" y="200" width="1" height="6" fill="#000"/><rect x="405" y="176" width="1" height="30" fill="#0f0"/><rect x="404" y="198" width="3" height="2" fill="#0f0"/><rect x="405" y="199" width="1" height="0" fill="#fff"/><rect x="409" y="194" width="1" height="16" fill="#0f0"/><rect x="408" y="199" width="3" height="2" fill="#0f0"/><rect x="409" y="200" width="1" height="0" fill="#000"/><rect x="413" y="198" width="1" height="23" fill="#0f0"/><rect x="412" y="204" width="3" height="2" fill="#0f0"/><rect x="413" y="205" width="1" height="0" fill="#000"/><rect x="417" y="194" width="1" height="15" fill="#0f0"/><rect x="416" y="198" width="3" height="8" fill="#0f0"/><rect x="417" y="199" width="1" height="6" fill="#000"/><rect x="421" y="185" width="1" height="14" fill="#0f0"/><rect x="420" y="188" width="3" height="11" fill="#0f0"/><rect x="421" y="189" width="1" height="9" fill="#000"/><rect x="425" y="179" width="1" height="18" fill="#0f0"/><rect x="424" y="186" width="3" height="4" fill="#0f0"/><rect x="425" y="187" width="1" height="2" fill="#000"/><rect x="429" y="175" width="1" height="16" fill="#0f0"/><rect x="428" y="186" width="3" height="2" fill="#0f0"/><rect x="429" y="187" width="1" height="0" fill="#fff"/><rect x="433" y="180" width="1" height="18" fill="#0f0"/><rect x="432" y="182" width="3" height="7" fill="#0f0"/><rect x="433" y="183" width="1" height="5" fill="#000"/><rect x="437" y="176" width="1" height="12" fill="#0f0"/><rect x="436" y="182" width="3" height="2" fill="#0f0"/><rect x="441" y="179" width="1" height="6" fill="#0f0"/><rect x="440" y="180" width="3" height="3" fill="#0f0"/><rect x="441" y="181" width="1" height="1" fill="#000"/><rect x="445" y="180" width="1" height="18" fill="#0f0"/><rect x="444" y="182" width="3" height="15" fill="#0f0"/><rect x="445" y="183" width="1" height="13" fill="#fff"/><rect x="449" y="189" width="1" height="24" fill="#0f0"/><rect x="448" y="199" width="3" height="14" fill="#0f0"/><rect x="449" y="200" width="1" height="12" fill="#fff"/><rect x="453" y="194" width="1" height="24" fill="#0f0"/><rect x="452" y="208" width="3" height="5" fill="#0f0"/><rect x="453" y="209" width="1" height="3" fill="#000"/><rect x="457" y="192" width="1" height="19" fill="#0f0"/><rect x="456" y="203" width="3" height="5" fill="#0f0"/><rect x="457" y="204" width="1" height="3" fill="#000"/><rect x="461" y="200" width="1" height="22" fill="#0f0"/><rect x="460" y="203" width="3" height="18" fill="#0f0"/><rect x="461" y="204" width="1" height="16" fill="#fff"/><rect x="465" y="239" width="1" height="31" fill="#0f0"/><rect x="464" y="243" width="3" height="20" fill="#0f0"/><rect x="465" y="244" width="1" height="18" fill="#fff"/><rect x="469" y="254" width="1" height="15" fill="#0f0"/><rect x="468" y="258" width="3" height="4" fill="#0f0"/><rect x="469" y="259" width="1" height="2" fill="#000"/><rect x="473" y="246" width="1" height="17" fill="#0f0"/><rect x="472" y="258" width="3" height="4" fill="#0f0"/><rect x="473" y="259" width="1" height="2" fill="#000"/><rect x="477" y="252" width="1" height="26" fill="#0f0"/><rect x="476" y="261" width="3" height="11" fill="#0f0"/><rect x="477" y="262" width="1" height="9" fill="#fff"/><rect x="481" y="265" width="1" height="16" fill="#0f0"/><rect x="480" y="266" width="3" height="11" fill="#0f0"/><rect x="481" y="267" width="1" height="9" fill="#fff"/><rect x="485" y="277" width="1" height="32" fill="#0f0"/><rect x="484" y="281" width="3" height="9" fill="#0f0"/><rect x="485" y="282" width="1" height="7" fill="#fff"/><rect x="489" y="274" width="1" height="19" fill="#0f0"/><rect x="488" y="288" width="3" height="1" fill="#0f0"/><rect x="493" y="277" width="1" height="20" fill="#0f0"/><rect x="492" y="283" width="3" height="5" fill="#0f0"/><rect x="493" y="284" width="1" height="3" fill="#000"/><rect x="497" y="271" width="1" height="20" fill="#0f0"/><rect x="496" y="282" width="3" height="1" fill="#0f0"/><rect x="501" y="276" width="1" height="34" fill="#0f0"/><rect x="500" y="283" width="3" height="22" fill="#0f0"/><rect x="501" y="284" width="1" height="20" fill="#fff"/><rect x="505" y="311" width="1" height="15" fill="#0f0"/><rect x="504" y="315" width="3" height="8" fill="#0f0"/><rect x="505" y="316" width="1" height="6" fill="#fff"/><rect x="509" y="316" width="1" height="21" fill="#0f0"/><rect x="508" y="322" width="3" height="13" fill="#0f0"/><rect x="509" y="323" width="1" height="11" fill="#fff"/><rect x="513" y="330" width="1" height="22" fill="#0f0"/><rect x="512" y="335" width="3" height="11" fill="#0f0"/><rect x="513" y="336" width="1" height="9" fill="#fff"/><rect x="517" y="325" width="1" height="26" fill="#0f0"/><rect x="516" y="341" width="3" height="5" fill="#0f0"/><rect x="517" y="342" width="1" height="3" fill="#000"/><rect x="521" y="341" width="1" height="28" fill="#0f0"/><rect x="520" y="341" width="3" height="14" fill="#0f0"/><rect x="521" y="342" width="1" height="12" fill="#fff"/><rect x="525" y="344" width="1" height="25" fill="#0f0"/><rect x="524" y="346" width="3" height="10" fill="#0f0"/><rect x="525" y="347" width="1" height="8" fill="#000"/><rect x="529" y="338" width="1" height="25" fill="#0f0"/><rect x="528" y="346" width="3" height="14" fill="#0f0"/><rect x="529" y="347" width="1" height="12" fill="#fff"/><rect x="533" y="328" width="1" height="47" fill="#0f0"/><rect x="532" y="336" width="3" height="26" fill="#0f0"/><rect x="533" y="337" width="1" height="24" fill="#000"/><rect x="537" y="330" width="1" height="20" fill="#0f0"/><rect x="536" y="336" width="3" height="4" fill="#0f0"/><rect x="537" y="337" width="1" height="2" fill="#fff"/><rect x="541" y="310" width="1" height="37" fill="#0f0"/><rect x="540" y="320" width="3" height="19" fill="#0f0"/><rect x="541" y="321" width="1" height="17" fill="#000"/><rect x="545" y="296" width="1" height="34" fill="#0f0"/><rect x="544" y="321" width="3" height="4" fill="#0f0"/><rect x="545" y="322" width="1" height="2" fill="#fff"/><rect x="549" y="314" width="1" height="22" fill="#0f0"/><rect x="548" y="316" width="3" height="9" fill="#0f0"/><rect x="549" y="317" width="1" height="7" fill="#000"/><rect x="553" y="295" width="1" height="25" fill="#0f0"/><rect x="552" y="296" width="3" height="16" fill="#0f0"/><rect x="553" y="297" width="1" height="14" fill="#000"/><rect x="557" y="296" width="1" height="27" fill="#0f0"/><rect x="556" y="297" width="3" height="23" fill="#0f0"/><rect x="557" y="298" width="1" height="21" fill="#fff"/><rect x="561" y="300" width="1" height="25" fill="#0f0"/><rect x="560" y="302" width="3" height="16" fill="#0f0"/><rect x="561" y="303" width="1" height="14" fill="#000"/><rect x="565" y="302" width="1" height="11" fill="#0f0"/><rect x="564" y="303" width="3" height="1" fill="#0f0"/><rect x="569" y="299" width="1" height="19" fill="#0f0"/><rect x="568" y="306" width="3" height="5" fill="#0f0"/><rect x="569" y="307" width="1" height="3" fill="#fff"/><rect x="573" y="302" width="1" height="24" fill="#0f0"/><rect x="572" y="302" width="3" height="11" fill="#0f0"/><rect x="573" y="303" width="1" height="9" fill="#000"/><rect x="577" y="287" width="1" height="34" fill="#0f0"/><rect x="576" y="300" width="3" height="5" fill="#0f0"/><rect x="577" y="301" width="1" height="3" fill="#000"/><rect x="581" y="296" width="1" height="33" fill="#0f0"/><rect x="580" y="300" width="3" height="23" fill="#0f0"/><rect x="581" y="301" width="1" height="21" fill="#fff"/><rect x="585" y="309" width="1" height="17" fill="#0f0"/><rect x="584" y="310" width="3" height="14" fill="#0f0"/><rect x="585" y="311" width="1" height="12" fill="#000"/><rect x="589" y="284" width="1" height="32" fill="#0f0"/><rect x="588" y="289" width="3" height="23" fill="#0f0"/><rect x="589" y="290" width="1" height="21" fill="#000"/><rect x="593" y="282" width="1" height="15" fill="#0f0"/><rect x="592" y="284" width="3" height="4" fill="#0f0"/><rect x="593" y="285" width="1" height="2" fill="#000"/><rect x="597" y="260" width="1" height="28" fill="#0f0"/><rect x="596" y="270" width="3" height="14" fill="#0f0"/><rect x="597" y="271" width="1" height="12" fill="#000"/></g>
<line x1="356.2" y1="100" x2="724.4" y2="392" stroke="#00f000" stroke-width="2.6"/>
<line x1="183.4" y1="100" x2="551.7" y2="392" stroke="#00f000" stroke-width="2.6"/>
<line x1="268.6" y1="100" x2="636.9" y2="392" stroke="#00ff00" stroke-width="1" stroke-dasharray="4,5"/>
<polyline points="9.0,167.2 25.4,149.6 38.0,149.0 41.8,149.2 47.5,150.9 51.9,149.6 58.2,143.3 65.7,135.1 73.3,126.9 79.6,125.7 88.4,125.7 94.7,121.3 96.5,115.3 100.0,107.0" fill="none" stroke="#87cefa" stroke-width="2" stroke-linejoin="round"/><polyline points="140.5,107.0 150.4,127.8 161.0,148.0 169.4,166.2 173.6,177.5 181.0,177.3 189.0,176.8 196.0,183.7 206.0,185.5 214.8,190.5 223.6,198.0 228.6,200.5 233.6,193.0 241.0,179.2 248.6,165.4 254.9,156.6 261.2,153.6 271.2,154.0 281.2,152.9 287.5,155.4 292.5,162.9 298.8,167.4 303.8,166.7 311.3,160.4 318.8,158.6 323.8,161.0 330.0,165.0 338.9,164.7 351.4,163.6 361.4,164.7 369.0,168.5 375.6,173.4 382.6,174.1 393.8,174.5 405.0,175.0 412.0,174.8 420.4,176.2 426.0,179.0 431.6,179.0 437.3,174.8 441.5,172.7 447.0,175.5 452.7,178.3 459.7,177.0 464.0,170.0 468.7,164.0 473.7,159.0 478.7,154.0 483.7,149.6 488.7,147.6 496.3,147.0 503.8,148.6 510.0,151.6 515.0,156.6 520.0,166.7 525.0,178.0 530.0,190.5 533.8,201.7 537.6,214.3 541.4,226.8 545.0,238.0 549.0,247.5 553.6,258.4 562.0,268.2 571.9,277.4 577.5,281.6 581.7,287.2 586.6,287.2 591.5,280.2 595.7,273.9 597.8,270.4" fill="none" stroke="#87cefa" stroke-width="2" stroke-linejoin="round"/>
<polyline points="8.8,218.0 25.0,204.3 40.5,192.0 58.0,176.7 67.0,171.0 77.0,164.7 85.9,158.4 91.0,158.0 97.0,161.6 102.0,167.0 113.0,171.0 123.0,178.0 130.0,181.7 137.0,184.5 145.5,189.4 154.0,199.0 161.0,207.0 166.6,215.5 173.6,225.4 180.6,230.3 189.0,231.7 196.0,235.9 207.2,240.8 219.9,244.3 231.0,245.0 238.0,242.2 245.0,235.2 252.0,227.5 259.0,220.4 266.0,214.8 274.6,210.0 281.6,205.7 291.2,196.7 296.2,192.5 301.3,193.0 304.0,195.2 312.4,198.0 319.4,201.2 327.9,203.2 339.0,203.6 350.3,202.9 357.3,204.3 364.4,207.8 371.4,210.0 378.4,210.9 385.4,210.6 392.4,207.8 399.4,205.0 406.5,202.9 416.0,202.6 423.2,203.2 433.0,203.6 440.0,201.5 447.0,198.7 454.0,197.7 461.0,198.7 465.3,202.2 471.0,205.7 478.0,210.0 483.6,215.5 489.2,221.0 494.8,227.5 500.4,234.5 506.3,242.0 513.8,251.3 521.3,265.0 527.6,280.0 533.8,295.0 540.0,306.4 548.0,311.0 556.4,316.7 566.2,320.2 576.0,322.3 583.0,323.7 588.7,323.3 593.0,320.2 597.8,316.0" fill="none" stroke="#87cefa" stroke-width="2" stroke-linejoin="round"/>
<polyline points="9.5,268.8 17.5,265.0 25.0,257.5 32.6,247.5 38.8,240.0 50.0,224.0 62.7,210.5 75.0,200.5 82.7,193.0 88.0,189.4 92.0,195.7 95.0,204.0 98.5,212.6 100.6,221.8 106.0,233.0 113.0,238.7 119.0,247.0 124.5,257.0 133.0,260.4 145.5,260.9 150.4,263.8 160.4,266.3 170.4,273.8 180.5,283.9 190.5,287.6 196.0,288.9 203.5,292.6 211.0,294.6 218.6,291.4 228.6,288.9 233.6,291.4 239.9,298.9 244.9,300.2 251.1,297.1 258.7,290.1 264.9,282.6 271.2,272.6 278.7,263.8 283.7,255.0 287.5,246.8 292.5,231.8 297.5,221.8 302.5,218.5 304.0,221.0 308.2,226.8 312.4,234.5 318.0,240.8 323.6,242.5 332.0,241.2 342.0,241.5 353.0,242.2 358.9,245.0 364.0,248.3 371.4,248.8 381.5,248.3 389.0,245.5 396.0,240.0 403.5,231.8 411.0,230.0 426.0,229.3 438.6,228.6 444.9,221.8 449.9,219.3 458.7,218.8 461.7,223.0 464.2,234.3 467.4,244.0 471.2,250.5 476.2,262.6 481.2,275.0 486.2,287.6 491.2,297.6 496.3,307.7 501.3,319.0 505.5,329.2 509.7,341.9 513.2,354.5 516.7,364.3 522.3,374.0 528.0,381.9 531.0,385.0" fill="none" stroke="#87cefa" stroke-width="2" stroke-linejoin="round"/><polyline points="540.0,385.0 544.8,375.5 551.8,372.0 560.2,368.5 568.6,366.4 577.0,364.3 582.7,360.8 588.0,362.2 596.0,362.3" fill="none" stroke="#87cefa" stroke-width="2" stroke-linejoin="round"/>
<line x1="66" y1="124.5" x2="752" y2="219" stroke="#f00" stroke-width="1.2"/>
<line x1="177.5" y1="285.8" x2="752" y2="148.8" stroke="#f00" stroke-width="1.2"/>
<polyline points="9.5,199.0 13.5,199.0 17.5,199.0 21.5,199.0 25.5,199.0 29.5,192.0 33.5,188.0 37.5,185.0 41.5,180.0 45.5,177.7 49.5,177.7 53.5,177.7 57.5,174.0 61.5,169.4 65.5,168.2 69.5,167.0 73.5,166.6 77.5,166.3 81.5,160.6 85.5,154.3 89.5,150.6" fill="none" stroke="#00ffff" stroke-width="1.25"/>
<rect x="8" y="198" width="3" height="3" fill="#00ffff" shape-rendering="crispEdges"/><rect x="12" y="198" width="3" height="3" fill="#00ffff" shape-rendering="crispEdges"/><rect x="16" y="198" width="3" height="3" fill="#00ffff" shape-rendering="crispEdges"/><rect x="20" y="198" width="3" height="3" fill="#00ffff" shape-rendering="crispEdges"/><rect x="24" y="198" width="3" height="3" fill="#00ffff" shape-rendering="crispEdges"/><rect x="28" y="191" width="3" height="3" fill="#00ffff" shape-rendering="crispEdges"/><rect x="32" y="187" width="3" height="3" fill="#00ffff" shape-rendering="crispEdges"/><rect x="36" y="184" width="3" height="3" fill="#00ffff" shape-rendering="crispEdges"/><rect x="40" y="179" width="3" height="3" fill="#00ffff" shape-rendering="crispEdges"/><rect x="44" y="177" width="3" height="3" fill="#00ffff" shape-rendering="crispEdges"/><rect x="48" y="177" width="3" height="3" fill="#00ffff" shape-rendering="crispEdges"/><rect x="52" y="177" width="3" height="3" fill="#00ffff" shape-rendering="crispEdges"/><rect x="56" y="173" width="3" height="3" fill="#00ffff" shape-rendering="crispEdges"/><rect x="60" y="168" width="3" height="3" fill="#00ffff" shape-rendering="crispEdges"/><rect x="64" y="167" width="3" height="3" fill="#00ffff" shape-rendering="crispEdges"/><rect x="68" y="166" width="3" height="3" fill="#00ffff" shape-rendering="crispEdges"/><rect x="72" y="166" width="3" height="3" fill="#00ffff" shape-rendering="crispEdges"/><rect x="76" y="165" width="3" height="3" fill="#00ffff" shape-rendering="crispEdges"/><rect x="80" y="160" width="3" height="3" fill="#00ffff" shape-rendering="crispEdges"/><rect x="84" y="153" width="3" height="3" fill="#00ffff" shape-rendering="crispEdges"/><rect x="88" y="150" width="3" height="3" fill="#00ffff" shape-rendering="crispEdges"/>
<polyline points="93.5,152.0 97.5,157.5 101.5,160.4 105.5,161.3 109.5,162.3 113.5,164.1 117.5,164.6 121.5,172.6 125.5,176.8 129.5,211.2" fill="none" stroke="#ff00ff" stroke-width="1.25"/>
<circle cx="93.5" cy="152.0" r="3.4" fill="#ff00ff"/><rect x="96" y="157" width="3" height="3" fill="#ff00ff" shape-rendering="crispEdges"/><rect x="100" y="159" width="3" height="3" fill="#ff00ff" shape-rendering="crispEdges"/><rect x="104" y="160" width="3" height="3" fill="#ff00ff" shape-rendering="crispEdges"/><rect x="108" y="161" width="3" height="3" fill="#ff00ff" shape-rendering="crispEdges"/><rect x="112" y="163" width="3" height="3" fill="#ff00ff" shape-rendering="crispEdges"/><rect x="116" y="164" width="3" height="3" fill="#ff00ff" shape-rendering="crispEdges"/><rect x="120" y="172" width="3" height="3" fill="#ff00ff" shape-rendering="crispEdges"/><rect x="124" y="176" width="3" height="3" fill="#ff00ff" shape-rendering="crispEdges"/><rect x="128" y="210" width="3" height="3" fill="#ff00ff" shape-rendering="crispEdges"/>
<polyline points="133.5,228.2 137.5,226.8 141.5,220.2 145.5,219.7" fill="none" stroke="#00ffff" stroke-width="1.25"/>
<circle cx="133.5" cy="228.2" r="3.4" fill="#00ffff"/><rect x="136" y="226" width="3" height="3" fill="#00ffff" shape-rendering="crispEdges"/><rect x="140" y="219" width="3" height="3" fill="#00ffff" shape-rendering="crispEdges"/><rect x="144" y="219" width="3" height="3" fill="#00ffff" shape-rendering="crispEdges"/>
<polyline points="149.5,202.0 153.5,204.1 157.5,204.6 161.5,212.8 165.5,215.4 169.5,215.4 173.5,215.4 177.5,221.0 181.5,221.3 185.5,242.2 189.5,242.2 193.5,244.3 197.5,249.4" fill="none" stroke="#ff00ff" stroke-width="1.25"/>
<circle cx="149.5" cy="202.0" r="3.4" fill="#ff00ff"/><rect x="152" y="203" width="3" height="3" fill="#ff00ff" shape-rendering="crispEdges"/><rect x="156" y="204" width="3" height="3" fill="#ff00ff" shape-rendering="crispEdges"/><rect x="160" y="212" width="3" height="3" fill="#ff00ff" shape-rendering="crispEdges"/><rect x="164" y="214" width="3" height="3" fill="#ff00ff" shape-rendering="crispEdges"/><rect x="168" y="214" width="3" height="3" fill="#ff00ff" shape-rendering="crispEdges"/><rect x="172" y="214" width="3" height="3" fill="#ff00ff" shape-rendering="crispEdges"/><rect x="176" y="220" width="3" height="3" fill="#ff00ff" shape-rendering="crispEdges"/><rect x="180" y="220" width="3" height="3" fill="#ff00ff" shape-rendering="crispEdges"/><rect x="184" y="241" width="3" height="3" fill="#ff00ff" shape-rendering="crispEdges"/><rect x="188" y="241" width="3" height="3" fill="#ff00ff" shape-rendering="crispEdges"/><rect x="192" y="243" width="3" height="3" fill="#ff00ff" shape-rendering="crispEdges"/><rect x="196" y="248" width="3" height="3" fill="#ff00ff" shape-rendering="crispEdges"/>
<polyline points="201.5,269.6 205.5,270.3 209.5,270.0 213.5,264.6 217.5,261.8 221.5,250.2 225.5,248.5 229.5,247.8 233.5,245.7 237.5,242.9 241.5,236.6 245.5,231.4 249.5,220.2 253.5,210.6 257.5,202.6 261.5,202.2 265.5,199.4" fill="none" stroke="#00ffff" stroke-width="1.25"/>
<circle cx="201.5" cy="269.6" r="3.4" fill="#00ffff"/><rect x="204" y="269" width="3" height="3" fill="#00ffff" shape-rendering="crispEdges"/><rect x="208" y="269" width="3" height="3" fill="#00ffff" shape-rendering="crispEdges"/><rect x="212" y="264" width="3" height="3" fill="#00ffff" shape-rendering="crispEdges"/><rect x="216" y="261" width="3" height="3" fill="#00ffff" shape-rendering="crispEdges"/><rect x="220" y="249" width="3" height="3" fill="#00ffff" shape-rendering="crispEdges"/><rect x="224" y="247" width="3" height="3" fill="#00ffff" shape-rendering="crispEdges"/><rect x="228" y="247" width="3" height="3" fill="#00ffff" shape-rendering="crispEdges"/><rect x="232" y="245" width="3" height="3" fill="#00ffff" shape-rendering="crispEdges"/><rect x="236" y="242" width="3" height="3" fill="#00ffff" shape-rendering="crispEdges"/><rect x="240" y="236" width="3" height="3" fill="#00ffff" shape-rendering="crispEdges"/><rect x="244" y="230" width="3" height="3" fill="#00ffff" shape-rendering="crispEdges"/><rect x="248" y="219" width="3" height="3" fill="#00ffff" shape-rendering="crispEdges"/><rect x="252" y="210" width="3" height="3" fill="#00ffff" shape-rendering="crispEdges"/><rect x="256" y="202" width="3" height="3" fill="#00ffff" shape-rendering="crispEdges"/><rect x="260" y="201" width="3" height="3" fill="#00ffff" shape-rendering="crispEdges"/><rect x="264" y="198" width="3" height="3" fill="#00ffff" shape-rendering="crispEdges"/>
<polyline points="269.5,178.8 273.5,180.2 277.5,183.4 281.5,183.4 285.5,186.5" fill="none" stroke="#ff00ff" stroke-width="1.25"/>
<circle cx="269.5" cy="178.8" r="3.4" fill="#ff00ff"/><rect x="272" y="179" width="3" height="3" fill="#ff00ff" shape-rendering="crispEdges"/><rect x="276" y="182" width="3" height="3" fill="#ff00ff" shape-rendering="crispEdges"/><rect x="280" y="182" width="3" height="3" fill="#ff00ff" shape-rendering="crispEdges"/><rect x="284" y="185" width="3" height="3" fill="#ff00ff" shape-rendering="crispEdges"/>
<polyline points="289.5,204.0 293.5,204.0" fill="none" stroke="#00ffff" stroke-width="1.25"/>
<circle cx="289.5" cy="204.0" r="3.4" fill="#00ffff"/><rect x="292" y="203" width="3" height="3" fill="#00ffff" shape-rendering="crispEdges"/>
<polyline points="297.5,184.4 301.5,187.2 305.5,191.5 309.5,192.4 313.5,193.0 317.5,193.4 321.5,193.8 325.5,195.2 329.5,200.0" fill="none" stroke="#ff00ff" stroke-width="1.25"/>
<circle cx="297.5" cy="184.4" r="3.4" fill="#ff00ff"/><rect x="300" y="186" width="3" height="3" fill="#ff00ff" shape-rendering="crispEdges"/><rect x="304" y="191" width="3" height="3" fill="#ff00ff" shape-rendering="crispEdges"/><rect x="308" y="191" width="3" height="3" fill="#ff00ff" shape-rendering="crispEdges"/><rect x="312" y="192" width="3" height="3" fill="#ff00ff" shape-rendering="crispEdges"/><rect x="316" y="192" width="3" height="3" fill="#ff00ff" shape-rendering="crispEdges"/><rect x="320" y="193" width="3" height="3" fill="#ff00ff" shape-rendering="crispEdges"/><rect x="324" y="194" width="3" height="3" fill="#ff00ff" shape-rendering="crispEdges"/><rect x="328" y="199" width="3" height="3" fill="#ff00ff" shape-rendering="crispEdges"/>
<polyline points="333.5,225.0 337.5,224.0 341.5,221.6 345.5,221.1 349.5,219.0 353.5,218.8 357.5,213.4" fill="none" stroke="#00ffff" stroke-width="1.25"/>
<circle cx="333.5" cy="225.0" r="3.4" fill="#00ffff"/><rect x="336" y="223" width="3" height="3" fill="#00ffff" shape-rendering="crispEdges"/><rect x="340" y="221" width="3" height="3" fill="#00ffff" shape-rendering="crispEdges"/><rect x="344" y="220" width="3" height="3" fill="#00ffff" shape-rendering="crispEdges"/><rect x="348" y="218" width="3" height="3" fill="#00ffff" shape-rendering="crispEdges"/><rect x="352" y="218" width="3" height="3" fill="#00ffff" shape-rendering="crispEdges"/><rect x="356" y="212" width="3" height="3" fill="#00ffff" shape-rendering="crispEdges"/>
<polyline points="361.5,188.9 365.5,190.3 369.5,190.3 373.5,190.3 377.5,190.3 381.5,195.9 385.5,200.0" fill="none" stroke="#ff00ff" stroke-width="1.25"/>
<circle cx="361.5" cy="188.9" r="3.4" fill="#ff00ff"/><rect x="364" y="189" width="3" height="3" fill="#ff00ff" shape-rendering="crispEdges"/><rect x="368" y="189" width="3" height="3" fill="#ff00ff" shape-rendering="crispEdges"/><rect x="372" y="189" width="3" height="3" fill="#ff00ff" shape-rendering="crispEdges"/><rect x="376" y="189" width="3" height="3" fill="#ff00ff" shape-rendering="crispEdges"/><rect x="380" y="195" width="3" height="3" fill="#ff00ff" shape-rendering="crispEdges"/><rect x="384" y="199" width="3" height="3" fill="#ff00ff" shape-rendering="crispEdges"/>
<polyline points="389.5,223.7 393.5,224.6 397.5,224.6 401.5,214.4 405.5,212.4 409.5,212.4 413.5,212.2 417.5,212.0 421.5,212.0 425.5,206.0 429.5,205.7 433.5,205.7 437.5,205.7 441.5,205.7 445.5,205.7" fill="none" stroke="#00ffff" stroke-width="1.25"/>
<circle cx="389.5" cy="223.7" r="3.4" fill="#00ffff"/><rect x="392" y="224" width="3" height="3" fill="#00ffff" shape-rendering="crispEdges"/><rect x="396" y="224" width="3" height="3" fill="#00ffff" shape-rendering="crispEdges"/><rect x="400" y="213" width="3" height="3" fill="#00ffff" shape-rendering="crispEdges"/><rect x="404" y="211" width="3" height="3" fill="#00ffff" shape-rendering="crispEdges"/><rect x="408" y="211" width="3" height="3" fill="#00ffff" shape-rendering="crispEdges"/><rect x="412" y="211" width="3" height="3" fill="#00ffff" shape-rendering="crispEdges"/><rect x="416" y="211" width="3" height="3" fill="#00ffff" shape-rendering="crispEdges"/><rect x="420" y="211" width="3" height="3" fill="#00ffff" shape-rendering="crispEdges"/><rect x="424" y="205" width="3" height="3" fill="#00ffff" shape-rendering="crispEdges"/><rect x="428" y="205" width="3" height="3" fill="#00ffff" shape-rendering="crispEdges"/><rect x="432" y="205" width="3" height="3" fill="#00ffff" shape-rendering="crispEdges"/><rect x="436" y="205" width="3" height="3" fill="#00ffff" shape-rendering="crispEdges"/><rect x="440" y="205" width="3" height="3" fill="#00ffff" shape-rendering="crispEdges"/><rect x="444" y="205" width="3" height="3" fill="#00ffff" shape-rendering="crispEdges"/>
<polyline points="449.5,186.8 453.5,187.2 457.5,187.5 461.5,188.2 465.5,202.2 469.5,203.2 473.5,205.7 477.5,207.8 481.5,216.3 485.5,227.2 489.5,228.3 493.5,230.2 497.5,256.4 501.5,264.4 505.5,272.2 509.5,276.4 513.5,290.4 517.5,295.3 521.5,300.2 525.5,300.2 529.5,300.2 533.5,304.4 537.5,330.4" fill="none" stroke="#ff00ff" stroke-width="1.25"/>
<circle cx="449.5" cy="186.8" r="3.4" fill="#ff00ff"/><rect x="452" y="186" width="3" height="3" fill="#ff00ff" shape-rendering="crispEdges"/><rect x="456" y="187" width="3" height="3" fill="#ff00ff" shape-rendering="crispEdges"/><rect x="460" y="187" width="3" height="3" fill="#ff00ff" shape-rendering="crispEdges"/><rect x="464" y="201" width="3" height="3" fill="#ff00ff" shape-rendering="crispEdges"/><rect x="468" y="202" width="3" height="3" fill="#ff00ff" shape-rendering="crispEdges"/><rect x="472" y="205" width="3" height="3" fill="#ff00ff" shape-rendering="crispEdges"/><rect x="476" y="207" width="3" height="3" fill="#ff00ff" shape-rendering="crispEdges"/><rect x="480" y="215" width="3" height="3" fill="#ff00ff" shape-rendering="crispEdges"/><rect x="484" y="226" width="3" height="3" fill="#ff00ff" shape-rendering="crispEdges"/><rect x="488" y="227" width="3" height="3" fill="#ff00ff" shape-rendering="crispEdges"/><rect x="492" y="229" width="3" height="3" fill="#ff00ff" shape-rendering="crispEdges"/><rect x="496" y="255" width="3" height="3" fill="#ff00ff" shape-rendering="crispEdges"/><rect x="500" y="263" width="3" height="3" fill="#ff00ff" shape-rendering="crispEdges"/><rect x="504" y="271" width="3" height="3" fill="#ff00ff" shape-rendering="crispEdges"/><rect x="508" y="275" width="3" height="3" fill="#ff00ff" shape-rendering="crispEdges"/><rect x="512" y="289" width="3" height="3" fill="#ff00ff" shape-rendering="crispEdges"/><rect x="516" y="294" width="3" height="3" fill="#ff00ff" shape-rendering="crispEdges"/><rect x="520" y="299" width="3" height="3" fill="#ff00ff" shape-rendering="crispEdges"/><rect x="524" y="299" width="3" height="3" fill="#ff00ff" shape-rendering="crispEdges"/><rect x="528" y="299" width="3" height="3" fill="#ff00ff" shape-rendering="crispEdges"/><rect x="532" y="303" width="3" height="3" fill="#ff00ff" shape-rendering="crispEdges"/><rect x="536" y="329" width="3" height="3" fill="#ff00ff" shape-rendering="crispEdges"/>
<polyline points="541.5,354.8 545.5,351.4 549.5,351.4 553.5,351.4 557.5,351.4 561.5,351.4 565.5,351.4 569.5,332.3 573.5,330.4 577.5,320.5" fill="none" stroke="#00ffff" stroke-width="1.25"/>
<circle cx="541.5" cy="354.8" r="3.4" fill="#00ffff"/><rect x="544" y="350" width="3" height="3" fill="#00ffff" shape-rendering="crispEdges"/><rect x="548" y="350" width="3" height="3" fill="#00ffff" shape-rendering="crispEdges"/><rect x="552" y="350" width="3" height="3" fill="#00ffff" shape-rendering="crispEdges"/><rect x="556" y="350" width="3" height="3" fill="#00ffff" shape-rendering="crispEdges"/><rect x="560" y="350" width="3" height="3" fill="#00ffff" shape-rendering="crispEdges"/><rect x="564" y="350" width="3" height="3" fill="#00ffff" shape-rendering="crispEdges"/><rect x="568" y="331" width="3" height="3" fill="#00ffff" shape-rendering="crispEdges"/><rect x="572" y="329" width="3" height="3" fill="#00ffff" shape-rendering="crispEdges"/><rect x="576" y="319" width="3" height="3" fill="#00ffff" shape-rendering="crispEdges"/>
<polyline points="581.5,301.0" fill="none" stroke="#ff00ff" stroke-width="1.25"/>
<circle cx="581.5" cy="301.0" r="3.4" fill="#ff00ff"/>
<polyline points="589.5,313.9 593.5,311.8 597.5,307.3" fill="none" stroke="#00ffff" stroke-width="1.25"/>
<circle cx="589.5" cy="313.9" r="3.4" fill="#00ffff"/><rect x="592" y="311" width="3" height="3" fill="#00ffff" shape-rendering="crispEdges"/><rect x="596" y="306" width="3" height="3" fill="#00ffff" shape-rendering="crispEdges"/>
<circle cx="592.5" cy="286.5" r="3" fill="none" stroke="#f00" stroke-width="1.2"/>
</g>
<g clip-path="url(#cs)">
<polyline points="8.8,423.9 25.0,423.9 37.6,425.9 57.6,425.9 75.0,426.4 87.7,428.9 97.7,436.4 107.8,447.7 117.8,455.2 127.8,460.2 137.8,460.7 150.4,459.7 160.4,458.4 170.4,461.5 180.5,464.0 190.5,465.7 196.0,466.5 203.5,467.2 211.0,465.2 218.6,459.0 226.0,451.4 233.6,444.0 240.0,438.0 250.0,431.0 263.7,427.6 271.2,428.9 281.2,431.4 288.7,433.9 295.0,436.4 305.0,442.0 315.0,447.5 327.6,451.4 336.4,449.7 346.4,449.0 356.4,449.0 364.0,448.0 371.4,446.4 379.0,444.0 386.5,445.2 396.0,446.4 406.0,448.2 413.5,447.7 423.6,444.0 433.6,441.4 442.4,439.0 450.0,441.0 460.0,448.0 470.0,456.0 480.0,464.0 492.5,472.7 498.8,476.5 506.3,482.8 513.8,485.8 521.3,487.3 528.8,486.5 536.4,482.8 543.9,477.7 551.4,472.7 558.9,467.7 566.4,461.5 574.0,455.2 581.5,449.7 589.0,445.7 597.7,442.0" fill="none" stroke="#7fffd4" stroke-width="2" stroke-linejoin="round"/>
<polyline points="8.8,417.6 13.8,417.6 16.3,423.9 22.6,423.9 27.6,430.0 31.3,434.0 36.3,432.6 40.0,421.4 42.6,431.4 46.4,434.0 50.0,427.6 54.0,425.0 57.0,418.8 61.4,420.0 66.4,417.6 72.7,416.3 75.2,423.9 77.7,433.9 81.5,433.9 84.0,445.0 86.5,452.7 90.2,465.2 94.0,476.5 99.0,484.0 105.0,488.0 112.0,482.0 118.0,474.0 124.0,466.0 127.8,455.0 131.6,445.0 136.6,444.0 144.0,442.7 146.6,455.0 149.0,466.5 154.0,467.7 159.0,475.0 163.0,479.0 168.0,480.0 173.0,482.0 176.7,479.0 180.5,472.7 184.2,460.0 188.0,451.4 191.7,449.0 196.0,447.7 199.8,450.2 203.5,460.2 206.0,464.0 208.5,457.7 212.3,444.0 213.5,439.0 220.0,432.0 230.0,428.0 240.0,426.0 250.0,430.0 260.7,439.0 263.2,444.0 267.4,446.4 272.0,449.0 278.0,447.0 283.0,440.0 287.5,433.9 290.0,432.0 295.0,440.0 297.5,450.2 301.3,461.5 306.3,469.0 310.0,472.7 312.5,469.0 318.0,466.0 322.0,460.0 326.3,452.7 330.0,439.0 336.0,434.0 342.0,434.0 346.4,437.6 350.0,439.0 352.6,451.4 357.7,455.2 361.4,466.5 364.4,462.7 367.7,454.0 372.0,449.0 376.5,444.0 381.5,442.7 386.5,446.4 390.2,447.7 396.0,447.7 401.0,444.0 406.0,442.7 411.0,446.4 414.8,444.0 418.6,440.0 425.0,436.0 435.0,433.0 442.4,439.0 444.9,449.0 448.6,461.5 451.0,465.2 454.9,457.7 458.7,455.2 461.2,470.2 465.0,481.5 468.7,480.3 473.7,481.5 478.7,485.3 483.7,487.8 488.7,486.5 492.5,480.3 496.3,477.7 500.0,484.0 503.8,490.3 508.8,494.0 513.8,492.8 517.6,486.5 521.3,484.0 526.3,480.3 530.0,476.5 532.6,462.7 536.4,460.2 540.0,450.2 545.0,449.0 548.9,441.4 552.6,438.0 556.4,447.7 560.0,442.7 564.0,439.0 569.0,445.2 572.7,440.0 576.4,439.6 580.2,450.2 582.7,454.0 586.5,445.2 590.2,439.0 594.0,436.0 597.5,434.0" fill="none" stroke="#1e90ff" stroke-width="2" stroke-linejoin="round"/>
<polyline points="9.4,408.6 13.9,404.0 18.9,406.7 25.2,411.0 30.2,416.7 34.0,425.6 37.8,430.0 41.6,432.5 45.3,435.6 48.5,430.0 52.9,426.8 56.0,416.7 60.5,406.7 65.5,402.3 69.3,406.7 74.3,408.0 78.7,411.0 82.5,418.0 85.6,429.3 88.2,439.4 90.7,456.0 91.5,462.7 95.2,477.7 100.3,490.3 104.0,495.0 107.8,495.8 111.5,491.5 115.3,482.8 120.3,476.5 125.3,472.7 129.0,462.7 132.8,445.2 136.6,422.6 140.4,405.0 144.0,398.8 147.9,405.0 151.6,430.0 155.4,455.2 160.4,477.7 165.4,490.3 171.7,494.0 178.0,492.8 183.0,486.5 186.7,475.2 190.5,457.7 194.2,437.6 198.0,426.4 201.0,421.4 204.8,423.9 208.5,434.0 211.0,437.0 214.8,430.0 218.6,415.0 223.6,401.3 231.0,396.3 240.0,393.8 247.4,397.5 253.6,406.3 258.7,417.6 263.7,433.9 268.7,450.2 273.7,462.7 277.5,467.2 281.2,461.5 285.0,450.2 290.0,433.9 295.0,422.6 297.5,423.9 301.3,445.2 305.0,465.2 310.0,484.0 315.0,494.0 318.8,494.0 322.6,485.3 326.3,470.2 330.0,447.7 333.8,422.6 337.6,406.3 341.4,398.0 345.0,396.3 348.9,398.8 352.6,410.0 356.4,430.0 360.0,455.2 364.0,474.0 367.7,485.3 370.0,486.5 374.0,477.7 377.7,462.7 381.5,447.7 385.0,440.0 390.0,433.9 396.0,428.9 401.0,428.9 406.0,433.9 411.0,440.0 416.0,442.7 421.0,439.0 426.0,428.9 431.0,420.0 437.4,413.8 442.4,411.3 446.0,415.0 448.6,433.9 452.4,457.7 457.4,475.2 462.4,484.0 467.4,490.3 473.7,494.8 481.2,495.8 487.5,495.3 492.5,489.0 497.5,479.0 501.3,476.5 505.0,478.0 508.8,485.3 513.8,492.8 518.8,495.3 523.8,491.5 528.8,487.8 533.8,480.3 537.6,469.0 541.4,452.7 545.0,439.0 549.0,425.0 554.0,412.0 560.0,404.0 567.0,402.0 574.0,408.0 579.0,420.0 583.0,438.0 587.0,445.0 590.5,440.0 594.5,430.0 598.0,417.4" fill="none" stroke="#f00" stroke-width="1"/>
<polyline points="9.4,404.8 13.9,401.6 18.9,409.2 25.2,414.2 30.2,421.8 34.6,434.4 37.0,437.0 39.7,435.0 41.6,429.3 44.0,432.5 46.0,434.4 48.5,424.3 52.9,421.2 55.4,407.9 57.9,396.6 61.7,401.6 65.5,406.7 69.3,411.0 73.0,407.3 76.8,413.0 80.6,420.5 83.0,431.9 85.6,449.5 86.9,456.0 90.2,472.7 94.0,485.3 99.0,494.0 105.0,497.0 111.0,493.0 117.8,480.0 122.8,479.0 125.3,480.0 127.8,467.7 130.3,442.7 132.8,412.6 136.6,397.5 140.4,396.3 144.0,398.8 147.9,425.0 150.4,447.7 154.0,472.7 158.0,487.8 163.0,493.3 170.4,494.0 176.7,491.5 180.5,485.3 184.2,470.2 188.0,455.2 191.7,435.0 195.5,422.6 199.8,417.6 203.5,423.9 207.3,436.4 209.8,444.0 213.5,436.4 217.3,415.0 219.8,400.0 226.0,399.5 233.6,395.5 240.0,393.8 246.0,397.5 252.4,406.3 257.4,417.6 262.4,433.9 266.2,455.2 269.2,469.0 273.7,467.7 277.5,465.2 281.2,452.7 285.0,437.6 288.7,420.0 292.5,413.8 295.0,421.4 298.8,445.2 302.5,467.7 306.3,485.3 310.0,494.0 315.0,494.8 320.0,487.8 323.8,472.7 327.6,452.7 331.3,425.0 335.0,405.0 338.9,398.8 343.9,397.0 347.6,402.6 351.4,417.6 355.0,442.7 359.0,467.7 362.7,487.8 365.2,494.0 369.0,482.8 372.7,467.7 376.5,452.7 380.2,441.4 384.0,436.4 387.7,433.9 392.7,428.9 396.0,426.4 399.8,428.9 403.5,436.4 408.5,441.4 413.5,445.2 418.6,440.0 422.3,431.4 426.0,421.4 431.0,416.3 436.0,412.6 441.0,406.3 443.6,412.6 446.0,433.9 449.9,462.7 453.6,482.8 458.7,482.8 462.4,485.3 467.4,495.8 473.7,494.8 478.7,495.3 482.5,497.8 487.5,491.5 491.2,480.3 495.0,472.7 498.8,476.5 502.5,485.3 506.3,491.5 510.0,495.8 515.0,495.3 520.0,490.3 525.0,486.5 528.8,485.3 532.6,476.5 535.0,465.2 537.6,447.7 540.0,432.0 543.0,426.0 548.0,417.0 555.0,409.0 562.0,406.0 570.0,409.0 576.0,418.0 580.0,435.0 582.7,446.4 584.5,455.0 588.0,440.0 592.0,420.0 597.7,401.0" fill="none" stroke="#ff0" stroke-width="1"/>
<g fill="#6b8e23" shape-rendering="crispEdges"><rect x="7" y="430" width="4" height="8"/><rect x="11" y="431" width="4" height="7"/><rect x="15" y="433" width="4" height="5"/><rect x="19" y="435" width="4" height="3"/><rect x="23" y="437" width="4" height="2"/><rect x="27" y="437" width="4" height="6"/><rect x="31" y="437" width="4" height="9"/><rect x="35" y="437" width="4" height="10"/><rect x="39" y="437" width="4" height="12"/><rect x="43" y="437" width="4" height="12"/><rect x="47" y="437" width="4" height="10"/><rect x="51" y="437" width="4" height="8"/><rect x="55" y="437" width="4" height="5"/><rect x="59" y="435" width="4" height="3"/><rect x="63" y="434" width="4" height="4"/><rect x="67" y="432" width="4" height="6"/><rect x="71" y="432" width="4" height="6"/><rect x="75" y="435" width="4" height="3"/><rect x="79" y="437" width="4" height="4"/><rect x="83" y="437" width="4" height="14"/><rect x="87" y="437" width="4" height="23"/><rect x="91" y="437" width="4" height="33"/><rect x="95" y="437" width="4" height="50"/><rect x="99" y="437" width="4" height="60"/><rect x="103" y="437" width="4" height="65"/><rect x="107" y="437" width="4" height="58"/><rect x="111" y="437" width="4" height="50"/><rect x="115" y="437" width="4" height="43"/><rect x="119" y="437" width="4" height="37"/><rect x="123" y="437" width="4" height="28"/><rect x="127" y="437" width="4" height="15"/><rect x="131" y="437" width="4" height="3"/><rect x="135" y="432" width="4" height="6"/><rect x="139" y="428" width="4" height="10"/><rect x="143" y="425" width="4" height="13"/><rect x="147" y="431" width="4" height="7"/><rect x="151" y="437" width="4" height="7"/><rect x="155" y="437" width="4" height="16"/><rect x="159" y="437" width="4" height="22"/><rect x="163" y="437" width="4" height="26"/><rect x="167" y="437" width="4" height="30"/><rect x="171" y="437" width="4" height="31"/><rect x="175" y="437" width="4" height="28"/><rect x="179" y="437" width="4" height="24"/><rect x="183" y="437" width="4" height="17"/><rect x="187" y="437" width="4" height="4"/><rect x="191" y="431" width="4" height="7"/><rect x="195" y="427" width="4" height="11"/><rect x="199" y="426" width="4" height="12"/><rect x="203" y="424" width="4" height="14"/><rect x="207" y="421" width="4" height="17"/><rect x="211" y="414" width="4" height="24"/><rect x="215" y="408" width="4" height="30"/><rect x="219" y="403" width="4" height="35"/><rect x="223" y="400" width="4" height="38"/><rect x="227" y="398" width="4" height="40"/><rect x="231" y="395" width="4" height="43"/><rect x="235" y="392" width="4" height="46"/><rect x="239" y="393" width="4" height="45"/><rect x="243" y="398" width="4" height="40"/><rect x="247" y="405" width="4" height="33"/><rect x="251" y="410" width="4" height="28"/><rect x="255" y="418" width="4" height="20"/><rect x="259" y="427" width="4" height="11"/><rect x="263" y="436" width="4" height="2"/><rect x="267" y="437" width="4" height="8"/><rect x="271" y="437" width="4" height="11"/><rect x="275" y="437" width="4" height="13"/><rect x="279" y="437" width="4" height="10"/><rect x="283" y="437" width="4" height="7"/><rect x="287" y="437" width="4" height="4"/><rect x="291" y="437" width="4" height="2"/><rect x="295" y="437" width="4" height="10"/><rect x="299" y="437" width="4" height="18"/><rect x="303" y="437" width="4" height="25"/><rect x="307" y="437" width="4" height="30"/><rect x="311" y="437" width="4" height="32"/><rect x="315" y="437" width="4" height="32"/><rect x="319" y="437" width="4" height="25"/><rect x="323" y="437" width="4" height="14"/><rect x="327" y="437" width="4" height="4"/><rect x="331" y="432" width="4" height="6"/><rect x="335" y="424" width="4" height="14"/><rect x="339" y="417" width="4" height="21"/><rect x="343" y="416" width="4" height="22"/><rect x="347" y="422" width="4" height="16"/><rect x="351" y="429" width="4" height="9"/><rect x="355" y="437" width="4" height="1"/><rect x="359" y="437" width="4" height="11"/><rect x="363" y="437" width="4" height="16"/><rect x="367" y="437" width="4" height="16"/><rect x="371" y="437" width="4" height="12"/><rect x="375" y="437" width="4" height="7"/><rect x="379" y="437" width="4" height="1"/><rect x="383" y="433" width="4" height="5"/><rect x="387" y="430" width="4" height="8"/><rect x="391" y="428" width="4" height="10"/><rect x="395" y="428" width="4" height="10"/><rect x="399" y="432" width="4" height="6"/><rect x="403" y="434" width="4" height="4"/><rect x="407" y="435" width="4" height="3"/><rect x="411" y="434" width="4" height="4"/><rect x="415" y="433" width="4" height="5"/><rect x="419" y="431" width="4" height="7"/><rect x="423" y="429" width="4" height="9"/><rect x="427" y="428" width="4" height="10"/><rect x="431" y="427" width="4" height="11"/><rect x="435" y="427" width="4" height="11"/><rect x="439" y="428" width="4" height="10"/><rect x="443" y="434" width="4" height="4"/><rect x="447" y="437" width="4" height="9"/><rect x="451" y="437" width="4" height="14"/><rect x="455" y="437" width="4" height="18"/><rect x="459" y="437" width="4" height="27"/><rect x="463" y="437" width="4" height="34"/><rect x="467" y="437" width="4" height="39"/><rect x="471" y="437" width="4" height="42"/><rect x="475" y="437" width="4" height="43"/><rect x="479" y="437" width="4" height="44"/><rect x="483" y="437" width="4" height="44"/><rect x="487" y="437" width="4" height="42"/><rect x="491" y="437" width="4" height="36"/><rect x="495" y="437" width="4" height="26"/><rect x="499" y="437" width="4" height="26"/><rect x="503" y="437" width="4" height="28"/><rect x="507" y="437" width="4" height="30"/><rect x="511" y="437" width="4" height="32"/><rect x="515" y="437" width="4" height="31"/><rect x="519" y="437" width="4" height="30"/><rect x="523" y="437" width="4" height="25"/><rect x="527" y="437" width="4" height="21"/><rect x="531" y="437" width="4" height="10"/><rect x="535" y="437" width="4" height="2"/><rect x="539" y="424" width="4" height="14"/><rect x="543" y="417" width="4" height="21"/><rect x="547" y="409" width="4" height="29"/><rect x="551" y="400" width="4" height="38"/><rect x="555" y="400" width="4" height="38"/><rect x="559" y="397" width="4" height="41"/><rect x="563" y="399" width="4" height="39"/><rect x="567" y="402" width="4" height="36"/><rect x="571" y="404" width="4" height="34"/><rect x="575" y="407" width="4" height="31"/><rect x="579" y="415" width="4" height="23"/><rect x="583" y="419" width="4" height="19"/><rect x="587" y="416" width="4" height="22"/><rect x="591" y="412" width="4" height="26"/><rect x="595" y="408" width="4" height="30"/></g>
</g>
<g stroke="#fff" stroke-width="1" fill="none" shape-rendering="crispEdges">
<line x1="8.5" x2="8.5" y1="108" y2="508"/><line x1="752.5" x2="752.5" y1="108" y2="508"/>
<line x1="8" x2="753" y1="108.5" y2="108.5"/><line x1="8" x2="753" y1="384.5" y2="384.5"/><line x1="8" x2="753" y1="386.5" y2="386.5"/><line x1="8" x2="753" y1="507.5" y2="507.5"/>
<line x1="753" x2="755" y1="126.5" y2="126.5"/>
<line x1="753" x2="755" y1="158.5" y2="158.5"/>
<line x1="753" x2="755" y1="190.5" y2="190.5"/>
<line x1="753" x2="755" y1="222.5" y2="222.5"/>
<line x1="753" x2="755" y1="254.5" y2="254.5"/>
<line x1="753" x2="755" y1="286.5" y2="286.5"/>
<line x1="753" x2="755" y1="318.5" y2="318.5"/>
<line x1="753" x2="755" y1="350.5" y2="350.5"/>
<line x1="753" x2="755" y1="382.5" y2="382.5"/>
<line x1="753" x2="755" y1="388.5" y2="388.5"/>
<line x1="9.5" x2="9.5" y1="508" y2="511"/>
<line x1="73.5" x2="73.5" y1="508" y2="511"/>
<line x1="137.5" x2="137.5" y1="508" y2="511"/>
<line x1="201.5" x2="201.5" y1="508" y2="511"/>
<line x1="265.5" x2="265.5" y1="508" y2="511"/>
<line x1="329.5" x2="329.5" y1="508" y2="511"/>
<line x1="393.5" x2="393.5" y1="508" y2="511"/>
<line x1="457.5" x2="457.5" y1="508" y2="511"/>
<line x1="521.5" x2="521.5" y1="508" y2="511"/>
<line x1="585.5" x2="585.5" y1="508" y2="511"/>
</g>
<g font-family="Liberation Sans, sans-serif" font-size="9.3px" fill="#fff" stroke="#fff" stroke-width="0.12">
<text x="759" y="128.6" font-size="8.9px">121.35</text>
<text x="759" y="160.6" font-size="8.9px">119.75</text>
<text x="759" y="192.6" font-size="8.9px">118.20</text>
<text x="759" y="224.6" font-size="8.9px">116.60</text>
<text x="759" y="256.6" font-size="8.9px">115.05</text>
<text x="759" y="288.6" font-size="8.9px">113.45</text>
<text x="759" y="320.6" font-size="8.9px">111.90</text>
<text x="759" y="352.6" font-size="8.9px">110.30</text>
<text x="759" y="384.6" font-size="8.9px">108.70</text>
<text x="757" y="396.3" font-size="8.9px">100</text>
<text x="755" y="413.3" font-size="8.9px">80</text>
<text x="755" y="425.3" font-size="8.9px">70</text>
<text x="755" y="473.3" font-size="8.9px">30</text>
<text x="755" y="485.3" font-size="8.9px">20</text>
<text x="756" y="502.8" font-size="8.9px">0</text>
<text x="8" y="519.2">15 Nov 2005</text>
<text x="72" y="519.2">7 Dec 2005</text>
<text x="136" y="519.2">29 Dec 2005</text>
<text x="200" y="519.2">20 Jan 2006</text>
<text x="264" y="519.2">13 Feb 2006</text>
<text x="328" y="519.2">7 Mar 2006</text>
<text x="392" y="519.2">29 Mar 2006</text>
<text x="456" y="519.2">20 Apr 2006</text>
<text x="520" y="519.2">12 May 2006</text>
<text x="584" y="519.2">5 Jun 2006</text>
</g>
<rect x="755" y="263" width="34" height="11" fill="#fff"/>
<text x="759" y="272" font-family="Liberation Sans, sans-serif" font-size="8.9px" fill="#000">114.23</text>
</svg>
<!-- chart border -->
<div class="abs" style="left:5px;top:104px;width:788px;height:2px;background:linear-gradient(#d8d2b4,#6a6040)"></div>
<div class="abs" style="left:5px;top:105px;width:1px;height:441px;background:#9a8f6a"></div>
<div class="abs" style="left:792px;top:105px;width:2px;height:421px;background:#fff"></div>
<div class="abs" id="tabs"></div>
<div class="abs" style="left:4px;top:525px;width:790px;height:1px;background:#fff"></div><div class="abs" style="left:4px;top:527px;width:5px;height:1px;background:#000"></div><div class="abs" style="left:8px;top:525px;width:87px;height:20px;background:#fff;border-right:1px solid #000;border-bottom:1px solid #000;box-shadow:1px 1px 0 #666"></div><div class="abs" style="left:8px;top:527px;width:1px;height:19px;background:#000"></div>
<div class="abs tab" style="left:20px;color:#000">USDJPY,Daily</div>
<div class="abs tab" style="left:105px">USDCHF,Daily</div><div class="abs tsep" style="left:184px"></div>
<div class="abs tab" style="left:194px">GBPUSD,Daily</div><div class="abs tsep" style="left:272px"></div>
<div class="abs tab" style="left:281px">EURUSD,Daily</div><div class="abs tsep" style="left:360px"></div>
<div class="abs tab" style="left:372px">AUDUSD,Daily</div><div class="abs tsep" style="left:452px"></div>
<div class="abs tab" style="left:463px">USDCAD,Daily</div><div class="abs tsep" style="left:544px"></div>
<div class="abs" style="left:765px;top:533px;width:0;height:0;border-top:3px solid transparent;border-bottom:3px solid transparent;border-right:4px solid #aca899"></div>
<div class="abs" style="left:783px;top:533px;width:0;height:0;border-top:3px solid transparent;border-bottom:3px solid transparent;border-left:4px solid #aca899"></div>
<div class="abs" id="status"></div>
<div class="abs st" style="left:6px;font-size:12px">寻求帮助,请:</div>
<div class="abs sd" style="left:73px"></div><div class="abs st" style="left:79px">Default</div>
<div class="abs sd" style="left:182px"></div><div class="abs st" style="left:187px">2006.05.24 00:00</div>
<div class="abs sd" style="left:284px"></div><div class="abs st" style="left:289px">O: 111.94</div>
<div class="abs sd" style="left:355px"></div><div class="abs st" style="left:360px">H: 112.95</div>
<div class="abs sd" style="left:426px"></div><div class="abs st" style="left:432px">L: 111.63</div>
<div class="abs sd" style="left:495px"></div><div class="abs st" style="left:501px">C: 112.92</div>
<div class="abs sd" style="left:566px"></div><div class="abs st" style="left:572px">V: 11787</div>
<div class="abs sd" style="left:632px"></div>
<svg class="abs" style="left:638px;top:552px" width="24" height="13" viewBox="0 0 24 13"><g shape-rendering="crispEdges"><rect x="0" y="0" width="2" height="12" fill="#a01010"/><rect x="3" y="0" width="2" height="12" fill="#a01010"/><rect x="6" y="0" width="2" height="12" fill="#a01010"/><rect x="9" y="0" width="2" height="12" fill="#a01010"/><rect x="12" y="0" width="2" height="12" fill="#a01010"/><rect x="15" y="0" width="2" height="12" fill="#a01010"/><rect x="18" y="0" width="2" height="12" fill="#a01010"/><rect x="21" y="0" width="2" height="12" fill="#a01010"/>
<rect x="0" y="0" width="2" height="10" fill="#5a8a1a"/><rect x="3" y="0" width="2" height="9" fill="#5a8a1a"/><rect x="6" y="0" width="2" height="8" fill="#5a8a1a"/><rect x="9" y="0" width="2" height="6" fill="#5a8a1a"/><rect x="12" y="0" width="2" height="5" fill="#5a8a1a"/><rect x="15" y="0" width="2" height="4" fill="#5a8a1a"/><rect x="18" y="0" width="2" height="3" fill="#5a8a1a"/><rect x="21" y="0" width="2" height="2" fill="#5a8a1a"/></g></svg>
<div class="abs st" style="left:691px">999/0 kb</div>
<svg class="abs" style="left:780px;top:554px" width="14" height="14" viewBox="0 0 14 14"><path d="M13 1L1 13M13 5L5 13M13 9L9 13" stroke="#b8b4a0" stroke-width="1.2"/><path d="M14 2L2 14M14 6L6 14M14 10L10 14" stroke="#fff" stroke-width="1"/></svg>
</body></html>
